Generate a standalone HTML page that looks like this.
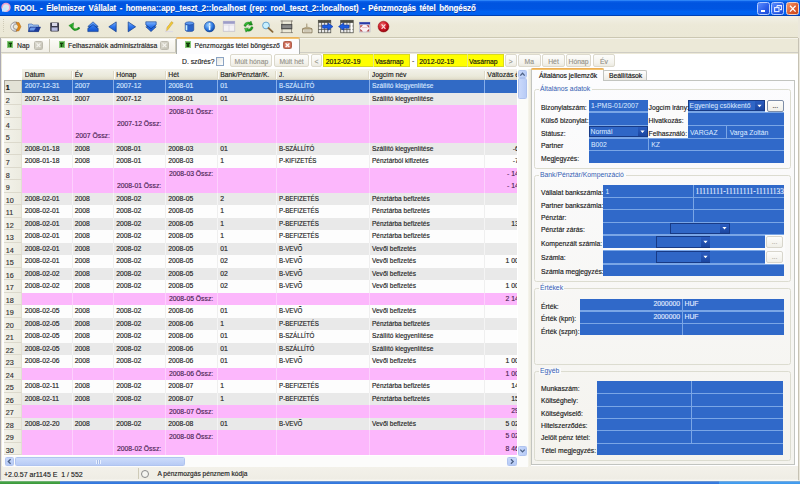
<!DOCTYPE html><html><head><meta charset="utf-8"><style>
*{box-sizing:border-box}
html,body{margin:0;padding:0}
body{width:800px;height:484px;overflow:hidden;position:relative;background:#ece9d8;font-family:"Liberation Sans",sans-serif;color:#000}
.a{position:absolute}
.t{position:absolute;white-space:nowrap;line-height:1;-webkit-text-stroke:0.15px currentColor}
.g{transform:scaleY(1.1);transform-origin:0 0}
</style></head><body>

<div class="a" style="left:0;top:0;width:800px;height:16px;background:linear-gradient(#3d95ff 0px,#0a5fe8 1.5px,#0054e0 3px,#0055e2 9px,#0062f2 11.5px,#0060ef 14.5px,#0041b5 15.5px,#0041b5 16px)"></div>
<svg class="a" style="left:0;top:0" width="14" height="16"><circle cx="6" cy="7.4" r="3.9" fill="#d8e8f0" stroke="#f0a0c8" stroke-width="1.6"/><rect x="2" y="7.6" width="4.6" height="4" fill="#c8e4ff"/></svg>
<div class="t" style="left:13.8px;top:3.6px;font-size:9px;word-spacing:1.5px;transform:scaleX(0.874);transform-origin:0 0;font-weight:bold;color:#fff;text-shadow:0.5px 0.5px 0 #0a3aa8">ROOL - Élelmiszer Vállalat - homena::app_teszt_2::localhost (rep: rool_teszt_2::localhost) - Pénzmozgás tétel böngésző</div>
<div class="a" style="left:757px;top:1.6px;width:13px;height:13px;border:0.9px solid #b4ccff;border-radius:2.5px;background:linear-gradient(135deg,#5c8eff,#2a5ce8 60%,#1c4cd8)"><div class="a" style="left:2.8px;top:7.6px;width:4.2px;height:1.6px;background:#fff"></div></div>
<div class="a" style="left:771px;top:1.6px;width:13px;height:13px;border:0.9px solid #b4ccff;border-radius:2.5px;background:linear-gradient(135deg,#5c8eff,#2a5ce8 60%,#1c4cd8)"><svg class="a" style="left:0;top:0" width="12" height="12"><path d="M5 2.6 H9.4 V6.6 H8 M5 2.6 V4.2" fill="none" stroke="#e8f0ff" stroke-width="1.1"/><rect x="2.6" y="4.6" width="4.4" height="4" fill="none" stroke="#e8f0ff" stroke-width="1.1"/></svg></div>
<div class="a" style="left:786px;top:1.6px;width:13px;height:13px;border:0.9px solid #f0d0c0;border-radius:2.5px;background:linear-gradient(135deg,#f29a70,#dc5a2c 60%,#c84a20)"><svg class="a" style="left:0;top:0" width="12" height="12"><path d="M3 2.8 L8.6 8.6 M8.6 2.8 L3 8.6" stroke="#fff" stroke-width="1.3"/></svg></div>
<div class="a" style="left:0;top:16px;width:800px;height:22px;background:linear-gradient(#f2f0e6,#ece9d8 40%,#ebe8d6)"></div>
<div class="a" style="left:0;top:37.2px;width:800px;height:1px;background:#cbc7b2"></div><div class="a" style="left:0;top:38.2px;width:800px;height:0.8px;background:#f5f3ea"></div>
<div class="a" style="left:2.5px;top:19px;width:1px;height:13px;background:repeating-linear-gradient(#cfcbb8 0 1px,transparent 1px 2px)"></div>
<svg class="a" style="left:0;top:16px" width="400" height="22" viewBox="0 16 400 22">
<defs>
<linearGradient id="gb" x1="0" y1="0" x2="0" y2="1"><stop offset="0" stop-color="#7fb4ff"/><stop offset="0.5" stop-color="#2a74ec"/><stop offset="1" stop-color="#1450c8"/></linearGradient>
<linearGradient id="gg" x1="0" y1="0" x2="1" y2="1"><stop offset="0" stop-color="#8ef07a"/><stop offset="0.5" stop-color="#22a822"/><stop offset="1" stop-color="#0c6c14"/></linearGradient>
<radialGradient id="gi" cx="0.4" cy="0.35" r="0.7"><stop offset="0" stop-color="#9ad0ff"/><stop offset="0.6" stop-color="#2c78e0"/><stop offset="1" stop-color="#10449c"/></radialGradient>
<radialGradient id="gr" cx="0.4" cy="0.35" r="0.7"><stop offset="0" stop-color="#f07070"/><stop offset="0.6" stop-color="#c81020"/><stop offset="1" stop-color="#8c0810"/></radialGradient>
</defs>
<!-- 1 gear/back -->
<path d="M16.5 22 A4.8 4.8 0 1 0 16.5 31.4 L16.5 29 A2.4 2.4 0 1 1 16.5 24.4 Z" fill="#c8c8cc" stroke="#7a7a80" stroke-width="0.6"/>
<path d="M14.6 23.4 A3.2 3.2 0 0 0 14.6 30 A3.5 3.5 0 0 1 14.6 23.4" fill="#fff"/>
<path d="M16.2 22.2 L19 22.6 L21 26.7 L19 30.8 L16.2 31.2 L18.2 26.7 Z" fill="#e08a1c" stroke="#9a5a10" stroke-width="0.4"/>
<!-- 2 folder -->
<path d="M28.5 24 L32 24 L33 25 L38.5 25 L38.5 31.5 L28.5 31.5 Z" fill="#9cc0f0" stroke="#3c64b0" stroke-width="0.6"/>
<path d="M30 27 L40.5 27 L38.5 31.6 L28.5 31.6 Z" fill="#1c3c9c" stroke="#0c2470" stroke-width="0.5"/>
<path d="M30.5 27.6 L36 27.6 L34 30.6 L29.4 30.6 Z" fill="#6c9ae8"/>
<!-- 3 floppy -->
<rect x="50.2" y="22.6" width="8.8" height="8.8" rx="0.8" fill="#3a3a4a"/>
<rect x="52" y="23" width="5.2" height="3" fill="#d8d8e8"/>
<rect x="51.6" y="27.4" width="6" height="3.4" fill="#b8bce0"/>
<!-- 4 green arrow -->
<path d="M68.8 25.6 L73.6 22.8 L73 29 Z" fill="#2cb42c" stroke="#0c6a12" stroke-width="0.4"/><path d="M71.6 26.6 C73 29.5 75.5 31 78.8 28.2" fill="none" stroke="#1a8a1e" stroke-width="2.3" stroke-linecap="round"/><path d="M72.2 26.4 C73.4 28.6 75.2 29.6 77.5 28.4" fill="none" stroke="#6cdc5c" stroke-width="0.8"/>
<!-- 5 double up -->
<path d="M93 21.8 L98.2 26.6 L96.2 26.6 L98.2 28.6 L98.2 31.6 L87.8 31.6 L87.8 28.6 L89.8 26.6 L87.8 26.6 Z" fill="url(#gb)" stroke="#0c3a8c" stroke-width="0.6"/>
<path d="M88.5 28.2 L93 24.6 L97.5 28.2" fill="none" stroke="#0c3a8c" stroke-width="0.7"/>
<!-- 6 left tri -->
<path d="M108.8 26.8 L116.2 21.9 L116.2 31.8 Z" fill="url(#gb)" stroke="#0c3a8c" stroke-width="0.7" stroke-linejoin="round"/>
<!-- 7 right tri -->
<path d="M135.6 26.8 L128.2 21.9 L128.2 31.8 Z" fill="url(#gb)" stroke="#0c3a8c" stroke-width="0.7" stroke-linejoin="round"/>
<!-- 8 double down -->
<path d="M151 31.6 L156.2 26.8 L154.2 26.8 L156.2 24.8 L156.2 21.8 L145.8 21.8 L145.8 24.8 L147.8 26.8 L145.8 26.8 Z" fill="url(#gb)" stroke="#0c3a8c" stroke-width="0.6"/>
<path d="M146.5 25.2 L151 28.8 L155.5 25.2" fill="none" stroke="#0c3a8c" stroke-width="0.7"/>
<!-- 9 pencil -->
<path d="M166 31.5 L166.5 28 L171.5 21.6 L173.2 22.8 L168.2 29.3 Z" fill="#f0c838" stroke="#b08a20" stroke-width="0.4"/>
<path d="M165 31.6 L173 31.6" stroke="#d8d4e8" stroke-width="0.8"/>
<path d="M166 26 L166 31 M166 26 L169 24" stroke="#e8e4f4" stroke-width="0.8"/>
<!-- 10 cylinder -->
<path d="M185.2 23.4 L185.2 30 A4.3 1.6 0 0 0 193.8 30 L193.8 23.4 Z" fill="#2a64c8" stroke="#143c8c" stroke-width="0.5"/>
<ellipse cx="189.5" cy="23.3" rx="4.3" ry="1.6" fill="#5c98f0" stroke="#143c8c" stroke-width="0.5"/>
<path d="M186.5 25.2 L186.5 30.3" stroke="#c8f0ff" stroke-width="1.6"/>
<!-- 11 info -->
<circle cx="209.5" cy="26.7" r="5.2" fill="url(#gi)" stroke="#0c3a8c" stroke-width="0.5"/>
<rect x="208.8" y="25.5" width="1.6" height="4.6" fill="#e8f6ff"/>
<circle cx="209.6" cy="23.9" r="0.9" fill="#e8f6ff"/>
<!-- 12 window -->
<rect x="223.2" y="21.2" width="11.6" height="10" fill="#f4f2f6" stroke="#b8b4c8" stroke-width="0.6"/>
<rect x="223.2" y="21.2" width="11.6" height="2.6" fill="#9c9cc8"/>
<path d="M224 25 L234 25 M229 25 L229 31" stroke="#c8c4d8" stroke-width="0.5"/>
<!-- 13 refresh -->
<path d="M244 26 C244 23 247 21.5 250 22.3 L251 21 L252.5 25 L248.5 25.2 L249.6 24.1 C247.8 23.7 246.2 24.6 246 26.4 Z" fill="url(#gg)" stroke="#0c6a12" stroke-width="0.4"/>
<path d="M253 27 C253 30 250 31.8 247 31 L246 32.2 L244.5 28.2 L248.5 28 L247.4 29.1 C249.2 29.5 250.8 28.6 251 26.8 Z" fill="url(#gg)" stroke="#0c6a12" stroke-width="0.4"/>
<!-- 14 magnifier -->
<circle cx="266" cy="25.5" r="3.4" fill="#c8f0ff" stroke="#5a9ac8" stroke-width="0.9"/>
<path d="M268.4 28 L272.6 31.8" stroke="#8a6a3c" stroke-width="1.8" stroke-linecap="round"/>
<!-- 15 film strip -->
<path d="M280.5 21 L293 21 M280.5 32.6 L293 32.6 M282 20.5 L282 33 M291.5 20.5 L291.5 33" stroke="#7a7468" stroke-width="0.7"/>
<rect x="281.5" y="24.2" width="10.5" height="4.8" fill="#585858" stroke="#3a3a3a" stroke-width="0.5"/>
<rect x="282.3" y="25.2" width="9" height="2.8" fill="#8a8a8a"/>
<!-- 16 tray -->
<path d="M302.6 28.8 L312 28.8 L312 32.8 L302.6 32.8 Z" fill="#ece6d4" stroke="#7c6e50" stroke-width="0.8"/>
<path d="M302.6 28.8 Q307.3 25.6 312 28.8 Z" fill="#c8b890" stroke="#8a7a58" stroke-width="0.5"/>
<path d="M306.8 23.6 L306.8 27.2" stroke="#9a8a68" stroke-width="0.9"/>
<path d="M304 31 L310.6 31" stroke="#9a9080" stroke-width="0.7"/>
<!-- 17 grid arrow right -->
<rect x="318.3" y="20.3" width="12.5" height="12.5" fill="#e8e8e8" stroke="#4a4a42" stroke-width="0.7"/>
<path d="M318.3 22.5 L330.8 22.5 M318.3 26 L330.8 26 M318.3 29.5 L330.8 29.5 M321.5 20.3 L321.5 32.8 M324.6 20.3 L324.6 32.8 M327.7 20.3 L327.7 32.8" stroke="#4a4a42" stroke-width="0.7"/>
<rect x="318.3" y="20.3" width="12.5" height="2.2" fill="#4a4a42"/>
<path d="M322.5 25 L328 25 L328 23 L333 26.6 L328 30.2 L328 28.2 L322.5 28.2 Z" fill="#1c5ce0" stroke="#0c2c98" stroke-width="0.5"/>
<!-- 18 grid arrow left -->
<rect x="340.7" y="20.3" width="12.5" height="12.5" fill="#e8e8e8" stroke="#4a4a42" stroke-width="0.7"/>
<path d="M340.7 22.5 L353.2 22.5 M340.7 26 L353.2 26 M340.7 29.5 L353.2 29.5 M343.8 20.3 L343.8 32.8 M346.9 20.3 L346.9 32.8 M350 20.3 L350 32.8" stroke="#4a4a42" stroke-width="0.7"/>
<rect x="340.7" y="20.3" width="12.5" height="2.2" fill="#4a4a42"/>
<rect x="350.6" y="23" width="1.8" height="9" fill="#fff"/>
<path d="M349 25 L343.5 25 L343.5 23 L338.5 26.6 L343.5 30.2 L343.5 28.2 L349 28.2 Z" fill="#1c5ce0" stroke="#0c2c98" stroke-width="0.5"/>
<!-- 19 red-white window -->
<rect x="359.4" y="22.2" width="10.6" height="9.8" fill="#fbf2f4" stroke="#9aa0c0" stroke-width="0.5"/>
<rect x="359.4" y="22.2" width="10.6" height="2.2" fill="#2a3aa8"/>
<path d="M360.2 25.2 L363 25.2 L360.2 28 Z M369.2 25.2 L366.4 25.2 L369.2 28 Z M360.2 31.4 L363 31.4 L360.2 28.8 Z M369.2 31.4 L366.4 31.4 L369.2 28.8 Z" fill="#b04848"/>
<path d="M362 27.6 L367.4 27.6" stroke="#e8b0b8" stroke-width="0.8"/>
<!-- 20 red X -->
<circle cx="383.5" cy="26.6" r="5.4" fill="url(#gr)" stroke="#8a0808" stroke-width="0.5"/>
<path d="M381.6 24.4 L385.4 28.8 M385.4 24.4 L381.6 28.8" stroke="#fbe0e0" stroke-width="1.1"/>
</svg>
<div class="a" style="left:0;top:39px;width:800px;height:13px;background:#ece9d8"></div>
<div class="a" style="left:0;top:51.8px;width:800px;height:1.2px;background:#cfcdc4"></div>
<div class="a" style="left:2px;top:39px;width:48px;height:13px;background:linear-gradient(#fbfaf6,#f1efe6);border-top:0.8px solid #fff"></div>
<div class="a" style="left:49px;top:39px;width:1.2px;height:13px;background:#c9c6b5"></div>
<div class="a" style="left:7.3px;top:41.2px;width:6px;height:7px;background:#3e9434;border:0.8px solid #86c878"></div>
<div class="a" style="left:8.6px;top:42.7px;width:3.4px;height:1.3px;background:#143c0c"></div>
<div class="a" style="left:9.6px;top:43.7px;width:1.4px;height:3.5px;background:#143c0c"></div>
<div class="t" style="left:17px;top:43.3px;font-size:6.8px;color:#222">Nap</div>
<div class="a" style="left:34px;top:41.2px;width:9px;height:8.5px;border-radius:1.5px;background:linear-gradient(135deg,#dcdad0,#c4c1b4);border:0.5px solid #bdbaae"></div>
<svg class="a" style="left:34px;top:41.2px" width="9" height="8.5"><path d="M2.6 2.4 L6.4 6.1 M6.4 2.4 L2.6 6.1" stroke="#f4f3ee" stroke-width="1.2"/></svg>
<div class="a" style="left:50px;top:39px;width:126px;height:13px;background:linear-gradient(#fbfaf6,#f1efe6);border-top:0.8px solid #fff"></div>
<div class="a" style="left:175px;top:39px;width:1.2px;height:13px;background:#c9c6b5"></div>
<div class="a" style="left:58.5px;top:41.2px;width:6px;height:7px;background:#3e9434;border:0.8px solid #86c878"></div>
<div class="a" style="left:59.8px;top:42.7px;width:3.4px;height:1.3px;background:#143c0c"></div>
<div class="a" style="left:60.8px;top:43.7px;width:1.4px;height:3.5px;background:#143c0c"></div>
<div class="t" style="left:68px;top:43.3px;font-size:6.8px;color:#222">Felhasználók adminisztrálása</div>
<div class="a" style="left:160px;top:41.2px;width:9px;height:8.5px;border-radius:1.5px;background:linear-gradient(135deg,#dcdad0,#c4c1b4);border:0.5px solid #bdbaae"></div>
<svg class="a" style="left:160px;top:41.2px" width="9" height="8.5"><path d="M2.6 2.4 L6.4 6.1 M6.4 2.4 L2.6 6.1" stroke="#f4f3ee" stroke-width="1.2"/></svg>
<div class="a" style="left:176.3px;top:37.5px;width:124.0px;height:16px;background:#fcfcfe;border:1px solid #a8aca8;border-bottom:none;border-radius:2px 2px 0 0"></div>
<div class="a" style="left:176.3px;top:37.4px;width:124.0px;height:2px;background:linear-gradient(#e6a850,#f6d080);border-radius:2px 2px 0 0"></div>
<div class="a" style="left:185px;top:41px;width:6px;height:7px;background:#3e9434;border:0.8px solid #86c878"></div>
<div class="a" style="left:186.3px;top:42.5px;width:3.4px;height:1.3px;background:#143c0c"></div>
<div class="a" style="left:187.3px;top:43.5px;width:1.4px;height:3.5px;background:#143c0c"></div>
<div class="t" style="left:194.5px;top:43.3px;font-size:6.8px;color:#222">Pénzmozgás tétel böngésző</div>
<div class="a" style="left:283.2px;top:40.7px;width:9px;height:8.5px;border-radius:1.5px;background:radial-gradient(circle at 50% 50%,#f0b8a8,#cc6a58 70%,#b85a48);border:0.5px solid #b0604c"></div>
<svg class="a" style="left:283.2px;top:40.7px" width="9" height="8.5"><path d="M2.6 2.4 L6.4 6.1 M6.4 2.4 L2.6 6.1" stroke="#fff" stroke-width="1.3"/></svg>
<div class="a" style="left:1.5px;top:53.5px;width:796px;height:413px;background:#fff"></div>
<div class="a" style="left:0;top:38px;width:1.2px;height:442px;background:#acaab4"></div>
<div class="a" style="left:797.6px;top:16px;width:2.4px;height:464px;background:#ebe8dc"></div><div class="a" style="left:797.6px;top:38px;width:1px;height:442px;background:#c6c2b4"></div>
<div class="a" style="left:1.5px;top:466px;width:796px;height:14.5px;background:linear-gradient(#f3f1ea,#efede5 85%,#fafaf6)"></div>
<div class="a" style="left:0;top:480.5px;width:800px;height:3.5px;background:linear-gradient(#8aa4c8,#3a7ee0 40%,#2f74dc)"></div>
<div class="a" style="left:719px;top:480.5px;width:81px;height:3.5px;background:linear-gradient(#90b0d0,#48a0f0 40%,#3c98ec)"></div>
<div class="a" style="left:0;top:480.5px;width:59.5px;height:3.5px;background:linear-gradient(#8ab890,#46a646 40%,#3a963a)"></div>
<div class="a" style="left:22px;top:69.0px;width:495px;height:11.25px;background:linear-gradient(#f3f2ea,#ebeadb 70%,#e2dfcc);border-bottom:1px solid #d6d2c2"></div>
<div class="a" style="left:71px;top:70.5px;width:1px;height:8.25px;background:#dedac8"></div><div class="a" style="left:72px;top:70.5px;width:1px;height:8.25px;background:#fcfcf8"></div>
<div class="t" style="left:24.75px;top:69.2px;padding-top:3px;font-size:6.8px;color:#1a1a1a;width:47px;overflow:hidden">Dátum</div>
<div class="a" style="left:112.5px;top:70.5px;width:1px;height:8.25px;background:#dedac8"></div><div class="a" style="left:113.5px;top:70.5px;width:1px;height:8.25px;background:#fcfcf8"></div>
<div class="t" style="left:74.75px;top:69.2px;padding-top:3px;font-size:6.8px;color:#1a1a1a;width:38.5px;overflow:hidden">Év</div>
<div class="a" style="left:164.5px;top:70.5px;width:1px;height:8.25px;background:#dedac8"></div><div class="a" style="left:165.5px;top:70.5px;width:1px;height:8.25px;background:#fcfcf8"></div>
<div class="t" style="left:116.25px;top:69.2px;padding-top:3px;font-size:6.8px;color:#1a1a1a;width:49.0px;overflow:hidden">Hónap</div>
<div class="a" style="left:216.5px;top:70.5px;width:1px;height:8.25px;background:#dedac8"></div><div class="a" style="left:217.5px;top:70.5px;width:1px;height:8.25px;background:#fcfcf8"></div>
<div class="t" style="left:168.25px;top:69.2px;padding-top:3px;font-size:6.8px;color:#1a1a1a;width:49.0px;overflow:hidden">Hét</div>
<div class="a" style="left:275px;top:70.5px;width:1px;height:8.25px;background:#dedac8"></div><div class="a" style="left:276px;top:70.5px;width:1px;height:8.25px;background:#fcfcf8"></div>
<div class="t" style="left:220.25px;top:69.2px;padding-top:3px;font-size:6.8px;color:#1a1a1a;width:55.5px;overflow:hidden">Bank/Pénztár/K.</div>
<div class="a" style="left:368px;top:70.5px;width:1px;height:8.25px;background:#dedac8"></div><div class="a" style="left:369px;top:70.5px;width:1px;height:8.25px;background:#fcfcf8"></div>
<div class="t" style="left:278.75px;top:69.2px;padding-top:3px;font-size:6.8px;color:#1a1a1a;width:90px;overflow:hidden">J.</div>
<div class="a" style="left:483.5px;top:70.5px;width:1px;height:8.25px;background:#dedac8"></div><div class="a" style="left:484.5px;top:70.5px;width:1px;height:8.25px;background:#fcfcf8"></div>
<div class="t" style="left:371.75px;top:69.2px;padding-top:3px;font-size:6.8px;color:#1a1a1a;width:112.5px;overflow:hidden">Jogcím név</div>
<div class="a" style="left:516px;top:70.5px;width:1px;height:8.25px;background:#dedac8"></div><div class="a" style="left:517px;top:70.5px;width:1px;height:8.25px;background:#fcfcf8"></div>
<div class="t" style="left:487.25px;top:69.2px;padding-top:3px;font-size:6.8px;color:#1a1a1a;width:29.5px;overflow:hidden">Változás é</div>
<div class="a" style="left:3.5px;top:80.25px;width:18.5px;height:12.5px;background:#e3e2d6;border:1px solid #a8a59a;border-right-color:#c8c5b8"></div>
<div class="t" style="left:5.8px;top:84.15px;font-size:7.2px;color:#101010;font-weight:bold">1</div>
<div class="a" style="left:22px;top:80.25px;width:495px;height:12.5px;background:#316ac5"></div>
<div class="a" style="left:71.5px;top:80.25px;width:1px;height:12.5px;background:#86aeea"></div>
<div class="a" style="left:113.0px;top:80.25px;width:1px;height:12.5px;background:#86aeea"></div>
<div class="a" style="left:165.0px;top:80.25px;width:1px;height:12.5px;background:#86aeea"></div>
<div class="a" style="left:217.0px;top:80.25px;width:1px;height:12.5px;background:#86aeea"></div>
<div class="a" style="left:275.5px;top:80.25px;width:1px;height:12.5px;background:#86aeea"></div>
<div class="a" style="left:368.5px;top:80.25px;width:1px;height:12.5px;background:#86aeea"></div>
<div class="a" style="left:484.0px;top:80.25px;width:1px;height:12.5px;background:#86aeea"></div>
<div class="t g" style="left:24.75px;top:82.05px;font-size:6.8px;color:#d4e4ff;">2007-12-31</div>
<div class="t g" style="left:74.75px;top:82.05px;font-size:6.8px;color:#d4e4ff;">2007</div>
<div class="t g" style="left:116.25px;top:82.05px;font-size:6.8px;color:#d4e4ff;">2007-12</div>
<div class="t g" style="left:168.25px;top:82.05px;font-size:6.8px;color:#d4e4ff;">2008-01</div>
<div class="t g" style="left:220.25px;top:82.05px;font-size:6.8px;color:#d4e4ff;">01</div>
<div class="t g" style="left:278.75px;top:82.05px;font-size:6.8px;color:#d4e4ff;transform:scale(0.91,1.1)">B-SZÁLLÍTÓ</div>
<div class="t g" style="left:371.75px;top:82.05px;font-size:6.8px;color:#d4e4ff;transform:scale(0.96,1.1)">Szállító kiegyenlítése</div>
<div class="a" style="left:3.5px;top:92.75px;width:18.5px;height:12.5px;background:linear-gradient(90deg,#f3f2ea,#ecebe0);border-bottom:1px solid #dcd9cc;border-right:1px solid #e2dfd2"></div>
<div class="t" style="left:5.8px;top:96.65px;font-size:7.2px;color:#303030;">2</div>
<div class="a" style="left:22px;top:92.75px;width:495px;height:12.5px;background:#e9e9e9"></div>
<div class="a" style="left:71.5px;top:92.75px;width:1px;height:12.5px;background:#f4f4f4"></div>
<div class="a" style="left:113.0px;top:92.75px;width:1px;height:12.5px;background:#f4f4f4"></div>
<div class="a" style="left:165.0px;top:92.75px;width:1px;height:12.5px;background:#f4f4f4"></div>
<div class="a" style="left:217.0px;top:92.75px;width:1px;height:12.5px;background:#f4f4f4"></div>
<div class="a" style="left:275.5px;top:92.75px;width:1px;height:12.5px;background:#f4f4f4"></div>
<div class="a" style="left:368.5px;top:92.75px;width:1px;height:12.5px;background:#f4f4f4"></div>
<div class="a" style="left:484.0px;top:92.75px;width:1px;height:12.5px;background:#f4f4f4"></div>
<div class="t g" style="left:24.75px;top:94.55px;font-size:6.8px;color:#1e1e1e;">2007-12-31</div>
<div class="t g" style="left:74.75px;top:94.55px;font-size:6.8px;color:#1e1e1e;">2007</div>
<div class="t g" style="left:116.25px;top:94.55px;font-size:6.8px;color:#1e1e1e;">2007-12</div>
<div class="t g" style="left:168.25px;top:94.55px;font-size:6.8px;color:#1e1e1e;">2008-01</div>
<div class="t g" style="left:220.25px;top:94.55px;font-size:6.8px;color:#1e1e1e;">01</div>
<div class="t g" style="left:278.75px;top:94.55px;font-size:6.8px;color:#1e1e1e;transform:scale(0.91,1.1)">B-SZÁLLÍTÓ</div>
<div class="t g" style="left:371.75px;top:94.55px;font-size:6.8px;color:#1e1e1e;transform:scale(0.96,1.1)">Szállító kiegyenlítése</div>
<div class="a" style="left:3.5px;top:105.25px;width:18.5px;height:12.5px;background:linear-gradient(90deg,#f3f2ea,#ecebe0);border-bottom:1px solid #dcd9cc;border-right:1px solid #e2dfd2"></div>
<div class="t" style="left:5.8px;top:109.15px;font-size:7.2px;color:#303030;">3</div>
<div class="a" style="left:22px;top:105.25px;width:495px;height:12.5px;background:#fcb7fc"></div>
<div class="a" style="left:71.5px;top:105.25px;width:1px;height:12.5px;background:#fdd0fd"></div>
<div class="a" style="left:113.0px;top:105.25px;width:1px;height:12.5px;background:#fdd0fd"></div>
<div class="a" style="left:165.0px;top:105.25px;width:1px;height:12.5px;background:#fdd0fd"></div>
<div class="a" style="left:217.0px;top:105.25px;width:1px;height:12.5px;background:#fdd0fd"></div>
<div class="a" style="left:275.5px;top:105.25px;width:1px;height:12.5px;background:#fdd0fd"></div>
<div class="a" style="left:368.5px;top:105.25px;width:1px;height:12.5px;background:#fdd0fd"></div>
<div class="a" style="left:484.0px;top:105.25px;width:1px;height:12.5px;background:#fdd0fd"></div>
<div class="t g" style="left:169.0px;top:107.64999999999999px;font-size:6.8px;color:#4a1f52">2008-01 Össz:</div>
<div class="a" style="left:3.5px;top:117.75px;width:18.5px;height:12.5px;background:linear-gradient(90deg,#f3f2ea,#ecebe0);border-bottom:1px solid #dcd9cc;border-right:1px solid #e2dfd2"></div>
<div class="t" style="left:5.8px;top:121.65px;font-size:7.2px;color:#303030;">4</div>
<div class="a" style="left:22px;top:117.75px;width:495px;height:12.5px;background:#fcb7fc"></div>
<div class="a" style="left:71.5px;top:117.75px;width:1px;height:12.5px;background:#fdd0fd"></div>
<div class="a" style="left:113.0px;top:117.75px;width:1px;height:12.5px;background:#fdd0fd"></div>
<div class="a" style="left:165.0px;top:117.75px;width:1px;height:12.5px;background:#fdd0fd"></div>
<div class="a" style="left:217.0px;top:117.75px;width:1px;height:12.5px;background:#fdd0fd"></div>
<div class="a" style="left:275.5px;top:117.75px;width:1px;height:12.5px;background:#fdd0fd"></div>
<div class="a" style="left:368.5px;top:117.75px;width:1px;height:12.5px;background:#fdd0fd"></div>
<div class="a" style="left:484.0px;top:117.75px;width:1px;height:12.5px;background:#fdd0fd"></div>
<div class="t g" style="left:117.0px;top:119.95px;font-size:6.8px;color:#4a1f52">2007-12 Össz:</div>
<div class="a" style="left:3.5px;top:130.25px;width:18.5px;height:12.5px;background:linear-gradient(90deg,#f3f2ea,#ecebe0);border-bottom:1px solid #dcd9cc;border-right:1px solid #e2dfd2"></div>
<div class="t" style="left:5.8px;top:134.15px;font-size:7.2px;color:#303030;">5</div>
<div class="a" style="left:22px;top:130.25px;width:495px;height:12.5px;background:#fcb7fc"></div>
<div class="a" style="left:71.5px;top:130.25px;width:1px;height:12.5px;background:#fdd0fd"></div>
<div class="a" style="left:113.0px;top:130.25px;width:1px;height:12.5px;background:#fdd0fd"></div>
<div class="a" style="left:165.0px;top:130.25px;width:1px;height:12.5px;background:#fdd0fd"></div>
<div class="a" style="left:217.0px;top:130.25px;width:1px;height:12.5px;background:#fdd0fd"></div>
<div class="a" style="left:275.5px;top:130.25px;width:1px;height:12.5px;background:#fdd0fd"></div>
<div class="a" style="left:368.5px;top:130.25px;width:1px;height:12.5px;background:#fdd0fd"></div>
<div class="a" style="left:484.0px;top:130.25px;width:1px;height:12.5px;background:#fdd0fd"></div>
<div class="t g" style="left:75.5px;top:131.75px;font-size:6.8px;color:#4a1f52">2007 Össz:</div>
<div class="a" style="left:3.5px;top:142.75px;width:18.5px;height:12.5px;background:linear-gradient(90deg,#f3f2ea,#ecebe0);border-bottom:1px solid #dcd9cc;border-right:1px solid #e2dfd2"></div>
<div class="t" style="left:5.8px;top:146.65px;font-size:7.2px;color:#303030;">6</div>
<div class="a" style="left:22px;top:142.75px;width:495px;height:12.5px;background:#e9e9e9"></div>
<div class="a" style="left:71.5px;top:142.75px;width:1px;height:12.5px;background:#f4f4f4"></div>
<div class="a" style="left:113.0px;top:142.75px;width:1px;height:12.5px;background:#f4f4f4"></div>
<div class="a" style="left:165.0px;top:142.75px;width:1px;height:12.5px;background:#f4f4f4"></div>
<div class="a" style="left:217.0px;top:142.75px;width:1px;height:12.5px;background:#f4f4f4"></div>
<div class="a" style="left:275.5px;top:142.75px;width:1px;height:12.5px;background:#f4f4f4"></div>
<div class="a" style="left:368.5px;top:142.75px;width:1px;height:12.5px;background:#f4f4f4"></div>
<div class="a" style="left:484.0px;top:142.75px;width:1px;height:12.5px;background:#f4f4f4"></div>
<div class="t g" style="left:24.75px;top:144.55px;font-size:6.8px;color:#1e1e1e;">2008-01-18</div>
<div class="t g" style="left:74.75px;top:144.55px;font-size:6.8px;color:#1e1e1e;">2008</div>
<div class="t g" style="left:116.25px;top:144.55px;font-size:6.8px;color:#1e1e1e;">2008-01</div>
<div class="t g" style="left:168.25px;top:144.55px;font-size:6.8px;color:#1e1e1e;">2008-03</div>
<div class="t g" style="left:220.25px;top:144.55px;font-size:6.8px;color:#1e1e1e;">01</div>
<div class="t g" style="left:278.75px;top:144.55px;font-size:6.8px;color:#1e1e1e;transform:scale(0.91,1.1)">B-SZÁLLÍTÓ</div>
<div class="t g" style="left:371.75px;top:144.55px;font-size:6.8px;color:#1e1e1e;transform:scale(0.96,1.1)">Szállító kiegyenlítése</div>
<div class="a" style="left:484.5px;top:144.95px;width:32.5px;height:9px;overflow:hidden"><div class="t" style="right:-5.5px;top:1px;font-size:6.8px;color:#1e1e1e">-60</div></div>
<div class="a" style="left:3.5px;top:155.25px;width:18.5px;height:12.5px;background:linear-gradient(90deg,#f3f2ea,#ecebe0);border-bottom:1px solid #dcd9cc;border-right:1px solid #e2dfd2"></div>
<div class="t" style="left:5.8px;top:159.15px;font-size:7.2px;color:#303030;">7</div>
<div class="a" style="left:22px;top:155.25px;width:495px;height:12.5px;background:#fdfdfd"></div>
<div class="a" style="left:71.5px;top:155.25px;width:1px;height:12.5px;background:#efefef"></div>
<div class="a" style="left:113.0px;top:155.25px;width:1px;height:12.5px;background:#efefef"></div>
<div class="a" style="left:165.0px;top:155.25px;width:1px;height:12.5px;background:#efefef"></div>
<div class="a" style="left:217.0px;top:155.25px;width:1px;height:12.5px;background:#efefef"></div>
<div class="a" style="left:275.5px;top:155.25px;width:1px;height:12.5px;background:#efefef"></div>
<div class="a" style="left:368.5px;top:155.25px;width:1px;height:12.5px;background:#efefef"></div>
<div class="a" style="left:484.0px;top:155.25px;width:1px;height:12.5px;background:#efefef"></div>
<div class="t g" style="left:24.75px;top:157.05px;font-size:6.8px;color:#1e1e1e;">2008-01-18</div>
<div class="t g" style="left:74.75px;top:157.05px;font-size:6.8px;color:#1e1e1e;">2008</div>
<div class="t g" style="left:116.25px;top:157.05px;font-size:6.8px;color:#1e1e1e;">2008-01</div>
<div class="t g" style="left:168.25px;top:157.05px;font-size:6.8px;color:#1e1e1e;">2008-03</div>
<div class="t g" style="left:220.25px;top:157.05px;font-size:6.8px;color:#1e1e1e;">1</div>
<div class="t g" style="left:278.75px;top:157.05px;font-size:6.8px;color:#1e1e1e;transform:scale(0.91,1.1)">P-KIFIZETÉS</div>
<div class="t g" style="left:371.75px;top:157.05px;font-size:6.8px;color:#1e1e1e;transform:scale(0.96,1.1)">Pénztárból kifizetés</div>
<div class="a" style="left:484.5px;top:157.45px;width:32.5px;height:9px;overflow:hidden"><div class="t" style="right:-5.5px;top:1px;font-size:6.8px;color:#1e1e1e">-70</div></div>
<div class="a" style="left:3.5px;top:167.75px;width:18.5px;height:12.5px;background:linear-gradient(90deg,#f3f2ea,#ecebe0);border-bottom:1px solid #dcd9cc;border-right:1px solid #e2dfd2"></div>
<div class="t" style="left:5.8px;top:171.65px;font-size:7.2px;color:#303030;">8</div>
<div class="a" style="left:22px;top:167.75px;width:495px;height:12.5px;background:#fcb7fc"></div>
<div class="a" style="left:71.5px;top:167.75px;width:1px;height:12.5px;background:#fdd0fd"></div>
<div class="a" style="left:113.0px;top:167.75px;width:1px;height:12.5px;background:#fdd0fd"></div>
<div class="a" style="left:165.0px;top:167.75px;width:1px;height:12.5px;background:#fdd0fd"></div>
<div class="a" style="left:217.0px;top:167.75px;width:1px;height:12.5px;background:#fdd0fd"></div>
<div class="a" style="left:275.5px;top:167.75px;width:1px;height:12.5px;background:#fdd0fd"></div>
<div class="a" style="left:368.5px;top:167.75px;width:1px;height:12.5px;background:#fdd0fd"></div>
<div class="a" style="left:484.0px;top:167.75px;width:1px;height:12.5px;background:#fdd0fd"></div>
<div class="t g" style="left:169.0px;top:170.15px;font-size:6.8px;color:#4a1f52">2008-03 Össz:</div>
<div class="a" style="left:484.5px;top:169.95px;width:32.5px;height:9px;overflow:hidden"><div class="t" style="right:-5.5px;top:1px;font-size:6.8px;color:#4a1f52">- 140</div></div>
<div class="a" style="left:3.5px;top:180.25px;width:18.5px;height:12.5px;background:linear-gradient(90deg,#f3f2ea,#ecebe0);border-bottom:1px solid #dcd9cc;border-right:1px solid #e2dfd2"></div>
<div class="t" style="left:5.8px;top:184.15px;font-size:7.2px;color:#303030;">9</div>
<div class="a" style="left:22px;top:180.25px;width:495px;height:12.5px;background:#fcb7fc"></div>
<div class="a" style="left:71.5px;top:180.25px;width:1px;height:12.5px;background:#fdd0fd"></div>
<div class="a" style="left:113.0px;top:180.25px;width:1px;height:12.5px;background:#fdd0fd"></div>
<div class="a" style="left:165.0px;top:180.25px;width:1px;height:12.5px;background:#fdd0fd"></div>
<div class="a" style="left:217.0px;top:180.25px;width:1px;height:12.5px;background:#fdd0fd"></div>
<div class="a" style="left:275.5px;top:180.25px;width:1px;height:12.5px;background:#fdd0fd"></div>
<div class="a" style="left:368.5px;top:180.25px;width:1px;height:12.5px;background:#fdd0fd"></div>
<div class="a" style="left:484.0px;top:180.25px;width:1px;height:12.5px;background:#fdd0fd"></div>
<div class="t g" style="left:117.0px;top:182.45000000000002px;font-size:6.8px;color:#4a1f52">2008-01 Össz:</div>
<div class="a" style="left:484.5px;top:182.45px;width:32.5px;height:9px;overflow:hidden"><div class="t" style="right:-5.5px;top:1px;font-size:6.8px;color:#4a1f52">- 140</div></div>
<div class="a" style="left:3.5px;top:192.75px;width:18.5px;height:12.5px;background:linear-gradient(90deg,#f3f2ea,#ecebe0);border-bottom:1px solid #dcd9cc;border-right:1px solid #e2dfd2"></div>
<div class="t" style="left:5.8px;top:196.65px;font-size:7.2px;color:#303030;">10</div>
<div class="a" style="left:22px;top:192.75px;width:495px;height:12.5px;background:#e9e9e9"></div>
<div class="a" style="left:71.5px;top:192.75px;width:1px;height:12.5px;background:#f4f4f4"></div>
<div class="a" style="left:113.0px;top:192.75px;width:1px;height:12.5px;background:#f4f4f4"></div>
<div class="a" style="left:165.0px;top:192.75px;width:1px;height:12.5px;background:#f4f4f4"></div>
<div class="a" style="left:217.0px;top:192.75px;width:1px;height:12.5px;background:#f4f4f4"></div>
<div class="a" style="left:275.5px;top:192.75px;width:1px;height:12.5px;background:#f4f4f4"></div>
<div class="a" style="left:368.5px;top:192.75px;width:1px;height:12.5px;background:#f4f4f4"></div>
<div class="a" style="left:484.0px;top:192.75px;width:1px;height:12.5px;background:#f4f4f4"></div>
<div class="t g" style="left:24.75px;top:194.55px;font-size:6.8px;color:#1e1e1e;">2008-02-01</div>
<div class="t g" style="left:74.75px;top:194.55px;font-size:6.8px;color:#1e1e1e;">2008</div>
<div class="t g" style="left:116.25px;top:194.55px;font-size:6.8px;color:#1e1e1e;">2008-02</div>
<div class="t g" style="left:168.25px;top:194.55px;font-size:6.8px;color:#1e1e1e;">2008-05</div>
<div class="t g" style="left:220.25px;top:194.55px;font-size:6.8px;color:#1e1e1e;">2</div>
<div class="t g" style="left:278.75px;top:194.55px;font-size:6.8px;color:#1e1e1e;transform:scale(0.91,1.1)">P-BEFIZETÉS</div>
<div class="t g" style="left:371.75px;top:194.55px;font-size:6.8px;color:#1e1e1e;transform:scale(0.96,1.1)">Pénztárba befizetés</div>
<div class="a" style="left:3.5px;top:205.25px;width:18.5px;height:12.5px;background:linear-gradient(90deg,#f3f2ea,#ecebe0);border-bottom:1px solid #dcd9cc;border-right:1px solid #e2dfd2"></div>
<div class="t" style="left:5.8px;top:209.15px;font-size:7.2px;color:#303030;">11</div>
<div class="a" style="left:22px;top:205.25px;width:495px;height:12.5px;background:#fdfdfd"></div>
<div class="a" style="left:71.5px;top:205.25px;width:1px;height:12.5px;background:#efefef"></div>
<div class="a" style="left:113.0px;top:205.25px;width:1px;height:12.5px;background:#efefef"></div>
<div class="a" style="left:165.0px;top:205.25px;width:1px;height:12.5px;background:#efefef"></div>
<div class="a" style="left:217.0px;top:205.25px;width:1px;height:12.5px;background:#efefef"></div>
<div class="a" style="left:275.5px;top:205.25px;width:1px;height:12.5px;background:#efefef"></div>
<div class="a" style="left:368.5px;top:205.25px;width:1px;height:12.5px;background:#efefef"></div>
<div class="a" style="left:484.0px;top:205.25px;width:1px;height:12.5px;background:#efefef"></div>
<div class="t g" style="left:24.75px;top:207.05px;font-size:6.8px;color:#1e1e1e;">2008-02-01</div>
<div class="t g" style="left:74.75px;top:207.05px;font-size:6.8px;color:#1e1e1e;">2008</div>
<div class="t g" style="left:116.25px;top:207.05px;font-size:6.8px;color:#1e1e1e;">2008-02</div>
<div class="t g" style="left:168.25px;top:207.05px;font-size:6.8px;color:#1e1e1e;">2008-05</div>
<div class="t g" style="left:220.25px;top:207.05px;font-size:6.8px;color:#1e1e1e;">1</div>
<div class="t g" style="left:278.75px;top:207.05px;font-size:6.8px;color:#1e1e1e;transform:scale(0.91,1.1)">P-BEFIZETÉS</div>
<div class="t g" style="left:371.75px;top:207.05px;font-size:6.8px;color:#1e1e1e;transform:scale(0.96,1.1)">Pénztárba befizetés</div>
<div class="a" style="left:3.5px;top:217.75px;width:18.5px;height:12.5px;background:linear-gradient(90deg,#f3f2ea,#ecebe0);border-bottom:1px solid #dcd9cc;border-right:1px solid #e2dfd2"></div>
<div class="t" style="left:5.8px;top:221.65px;font-size:7.2px;color:#303030;">12</div>
<div class="a" style="left:22px;top:217.75px;width:495px;height:12.5px;background:#e9e9e9"></div>
<div class="a" style="left:71.5px;top:217.75px;width:1px;height:12.5px;background:#f4f4f4"></div>
<div class="a" style="left:113.0px;top:217.75px;width:1px;height:12.5px;background:#f4f4f4"></div>
<div class="a" style="left:165.0px;top:217.75px;width:1px;height:12.5px;background:#f4f4f4"></div>
<div class="a" style="left:217.0px;top:217.75px;width:1px;height:12.5px;background:#f4f4f4"></div>
<div class="a" style="left:275.5px;top:217.75px;width:1px;height:12.5px;background:#f4f4f4"></div>
<div class="a" style="left:368.5px;top:217.75px;width:1px;height:12.5px;background:#f4f4f4"></div>
<div class="a" style="left:484.0px;top:217.75px;width:1px;height:12.5px;background:#f4f4f4"></div>
<div class="t g" style="left:24.75px;top:219.55px;font-size:6.8px;color:#1e1e1e;">2008-02-01</div>
<div class="t g" style="left:74.75px;top:219.55px;font-size:6.8px;color:#1e1e1e;">2008</div>
<div class="t g" style="left:116.25px;top:219.55px;font-size:6.8px;color:#1e1e1e;">2008-02</div>
<div class="t g" style="left:168.25px;top:219.55px;font-size:6.8px;color:#1e1e1e;">2008-05</div>
<div class="t g" style="left:220.25px;top:219.55px;font-size:6.8px;color:#1e1e1e;">1</div>
<div class="t g" style="left:278.75px;top:219.55px;font-size:6.8px;color:#1e1e1e;transform:scale(0.91,1.1)">P-BEFIZETÉS</div>
<div class="t g" style="left:371.75px;top:219.55px;font-size:6.8px;color:#1e1e1e;transform:scale(0.96,1.1)">Pénztárba befizetés</div>
<div class="a" style="left:484.5px;top:219.95px;width:32.5px;height:9px;overflow:hidden"><div class="t" style="right:-5.5px;top:1px;font-size:6.8px;color:#1e1e1e">130</div></div>
<div class="a" style="left:3.5px;top:230.25px;width:18.5px;height:12.5px;background:linear-gradient(90deg,#f3f2ea,#ecebe0);border-bottom:1px solid #dcd9cc;border-right:1px solid #e2dfd2"></div>
<div class="t" style="left:5.8px;top:234.15px;font-size:7.2px;color:#303030;">13</div>
<div class="a" style="left:22px;top:230.25px;width:495px;height:12.5px;background:#fdfdfd"></div>
<div class="a" style="left:71.5px;top:230.25px;width:1px;height:12.5px;background:#efefef"></div>
<div class="a" style="left:113.0px;top:230.25px;width:1px;height:12.5px;background:#efefef"></div>
<div class="a" style="left:165.0px;top:230.25px;width:1px;height:12.5px;background:#efefef"></div>
<div class="a" style="left:217.0px;top:230.25px;width:1px;height:12.5px;background:#efefef"></div>
<div class="a" style="left:275.5px;top:230.25px;width:1px;height:12.5px;background:#efefef"></div>
<div class="a" style="left:368.5px;top:230.25px;width:1px;height:12.5px;background:#efefef"></div>
<div class="a" style="left:484.0px;top:230.25px;width:1px;height:12.5px;background:#efefef"></div>
<div class="t g" style="left:24.75px;top:232.05px;font-size:6.8px;color:#1e1e1e;">2008-02-01</div>
<div class="t g" style="left:74.75px;top:232.05px;font-size:6.8px;color:#1e1e1e;">2008</div>
<div class="t g" style="left:116.25px;top:232.05px;font-size:6.8px;color:#1e1e1e;">2008-02</div>
<div class="t g" style="left:168.25px;top:232.05px;font-size:6.8px;color:#1e1e1e;">2008-05</div>
<div class="t g" style="left:220.25px;top:232.05px;font-size:6.8px;color:#1e1e1e;">1</div>
<div class="t g" style="left:278.75px;top:232.05px;font-size:6.8px;color:#1e1e1e;transform:scale(0.91,1.1)">P-BEFIZETÉS</div>
<div class="t g" style="left:371.75px;top:232.05px;font-size:6.8px;color:#1e1e1e;transform:scale(0.96,1.1)">Pénztárba befizetés</div>
<div class="a" style="left:3.5px;top:242.75px;width:18.5px;height:12.5px;background:linear-gradient(90deg,#f3f2ea,#ecebe0);border-bottom:1px solid #dcd9cc;border-right:1px solid #e2dfd2"></div>
<div class="t" style="left:5.8px;top:246.65px;font-size:7.2px;color:#303030;">14</div>
<div class="a" style="left:22px;top:242.75px;width:495px;height:12.5px;background:#e9e9e9"></div>
<div class="a" style="left:71.5px;top:242.75px;width:1px;height:12.5px;background:#f4f4f4"></div>
<div class="a" style="left:113.0px;top:242.75px;width:1px;height:12.5px;background:#f4f4f4"></div>
<div class="a" style="left:165.0px;top:242.75px;width:1px;height:12.5px;background:#f4f4f4"></div>
<div class="a" style="left:217.0px;top:242.75px;width:1px;height:12.5px;background:#f4f4f4"></div>
<div class="a" style="left:275.5px;top:242.75px;width:1px;height:12.5px;background:#f4f4f4"></div>
<div class="a" style="left:368.5px;top:242.75px;width:1px;height:12.5px;background:#f4f4f4"></div>
<div class="a" style="left:484.0px;top:242.75px;width:1px;height:12.5px;background:#f4f4f4"></div>
<div class="t g" style="left:24.75px;top:244.55px;font-size:6.8px;color:#1e1e1e;">2008-02-01</div>
<div class="t g" style="left:74.75px;top:244.55px;font-size:6.8px;color:#1e1e1e;">2008</div>
<div class="t g" style="left:116.25px;top:244.55px;font-size:6.8px;color:#1e1e1e;">2008-02</div>
<div class="t g" style="left:168.25px;top:244.55px;font-size:6.8px;color:#1e1e1e;">2008-05</div>
<div class="t g" style="left:220.25px;top:244.55px;font-size:6.8px;color:#1e1e1e;">01</div>
<div class="t g" style="left:278.75px;top:244.55px;font-size:6.8px;color:#1e1e1e;transform:scale(0.91,1.1)">B-VEVŐ</div>
<div class="t g" style="left:371.75px;top:244.55px;font-size:6.8px;color:#1e1e1e;transform:scale(0.96,1.1)">Vevői befizetés</div>
<div class="a" style="left:3.5px;top:255.25px;width:18.5px;height:12.5px;background:linear-gradient(90deg,#f3f2ea,#ecebe0);border-bottom:1px solid #dcd9cc;border-right:1px solid #e2dfd2"></div>
<div class="t" style="left:5.8px;top:259.15px;font-size:7.2px;color:#303030;">15</div>
<div class="a" style="left:22px;top:255.25px;width:495px;height:12.5px;background:#fdfdfd"></div>
<div class="a" style="left:71.5px;top:255.25px;width:1px;height:12.5px;background:#efefef"></div>
<div class="a" style="left:113.0px;top:255.25px;width:1px;height:12.5px;background:#efefef"></div>
<div class="a" style="left:165.0px;top:255.25px;width:1px;height:12.5px;background:#efefef"></div>
<div class="a" style="left:217.0px;top:255.25px;width:1px;height:12.5px;background:#efefef"></div>
<div class="a" style="left:275.5px;top:255.25px;width:1px;height:12.5px;background:#efefef"></div>
<div class="a" style="left:368.5px;top:255.25px;width:1px;height:12.5px;background:#efefef"></div>
<div class="a" style="left:484.0px;top:255.25px;width:1px;height:12.5px;background:#efefef"></div>
<div class="t g" style="left:24.75px;top:257.05px;font-size:6.8px;color:#1e1e1e;">2008-02-01</div>
<div class="t g" style="left:74.75px;top:257.05px;font-size:6.8px;color:#1e1e1e;">2008</div>
<div class="t g" style="left:116.25px;top:257.05px;font-size:6.8px;color:#1e1e1e;">2008-02</div>
<div class="t g" style="left:168.25px;top:257.05px;font-size:6.8px;color:#1e1e1e;">2008-05</div>
<div class="t g" style="left:220.25px;top:257.05px;font-size:6.8px;color:#1e1e1e;">02</div>
<div class="t g" style="left:278.75px;top:257.05px;font-size:6.8px;color:#1e1e1e;transform:scale(0.91,1.1)">B-VEVŐ</div>
<div class="t g" style="left:371.75px;top:257.05px;font-size:6.8px;color:#1e1e1e;transform:scale(0.96,1.1)">Vevői befizetés</div>
<div class="a" style="left:484.5px;top:257.45px;width:32.5px;height:9px;overflow:hidden"><div class="t" style="right:-5.5px;top:1px;font-size:6.8px;color:#1e1e1e">1 000</div></div>
<div class="a" style="left:3.5px;top:267.75px;width:18.5px;height:12.5px;background:linear-gradient(90deg,#f3f2ea,#ecebe0);border-bottom:1px solid #dcd9cc;border-right:1px solid #e2dfd2"></div>
<div class="t" style="left:5.8px;top:271.65px;font-size:7.2px;color:#303030;">16</div>
<div class="a" style="left:22px;top:267.75px;width:495px;height:12.5px;background:#e9e9e9"></div>
<div class="a" style="left:71.5px;top:267.75px;width:1px;height:12.5px;background:#f4f4f4"></div>
<div class="a" style="left:113.0px;top:267.75px;width:1px;height:12.5px;background:#f4f4f4"></div>
<div class="a" style="left:165.0px;top:267.75px;width:1px;height:12.5px;background:#f4f4f4"></div>
<div class="a" style="left:217.0px;top:267.75px;width:1px;height:12.5px;background:#f4f4f4"></div>
<div class="a" style="left:275.5px;top:267.75px;width:1px;height:12.5px;background:#f4f4f4"></div>
<div class="a" style="left:368.5px;top:267.75px;width:1px;height:12.5px;background:#f4f4f4"></div>
<div class="a" style="left:484.0px;top:267.75px;width:1px;height:12.5px;background:#f4f4f4"></div>
<div class="t g" style="left:24.75px;top:269.55px;font-size:6.8px;color:#1e1e1e;">2008-02-02</div>
<div class="t g" style="left:74.75px;top:269.55px;font-size:6.8px;color:#1e1e1e;">2008</div>
<div class="t g" style="left:116.25px;top:269.55px;font-size:6.8px;color:#1e1e1e;">2008-02</div>
<div class="t g" style="left:168.25px;top:269.55px;font-size:6.8px;color:#1e1e1e;">2008-05</div>
<div class="t g" style="left:220.25px;top:269.55px;font-size:6.8px;color:#1e1e1e;">02</div>
<div class="t g" style="left:278.75px;top:269.55px;font-size:6.8px;color:#1e1e1e;transform:scale(0.91,1.1)">B-VEVŐ</div>
<div class="t g" style="left:371.75px;top:269.55px;font-size:6.8px;color:#1e1e1e;transform:scale(0.96,1.1)">Vevői befizetés</div>
<div class="a" style="left:3.5px;top:280.25px;width:18.5px;height:12.5px;background:linear-gradient(90deg,#f3f2ea,#ecebe0);border-bottom:1px solid #dcd9cc;border-right:1px solid #e2dfd2"></div>
<div class="t" style="left:5.8px;top:284.15px;font-size:7.2px;color:#303030;">17</div>
<div class="a" style="left:22px;top:280.25px;width:495px;height:12.5px;background:#fdfdfd"></div>
<div class="a" style="left:71.5px;top:280.25px;width:1px;height:12.5px;background:#efefef"></div>
<div class="a" style="left:113.0px;top:280.25px;width:1px;height:12.5px;background:#efefef"></div>
<div class="a" style="left:165.0px;top:280.25px;width:1px;height:12.5px;background:#efefef"></div>
<div class="a" style="left:217.0px;top:280.25px;width:1px;height:12.5px;background:#efefef"></div>
<div class="a" style="left:275.5px;top:280.25px;width:1px;height:12.5px;background:#efefef"></div>
<div class="a" style="left:368.5px;top:280.25px;width:1px;height:12.5px;background:#efefef"></div>
<div class="a" style="left:484.0px;top:280.25px;width:1px;height:12.5px;background:#efefef"></div>
<div class="t g" style="left:24.75px;top:282.05px;font-size:6.8px;color:#1e1e1e;">2008-02-02</div>
<div class="t g" style="left:74.75px;top:282.05px;font-size:6.8px;color:#1e1e1e;">2008</div>
<div class="t g" style="left:116.25px;top:282.05px;font-size:6.8px;color:#1e1e1e;">2008-02</div>
<div class="t g" style="left:168.25px;top:282.05px;font-size:6.8px;color:#1e1e1e;">2008-05</div>
<div class="t g" style="left:220.25px;top:282.05px;font-size:6.8px;color:#1e1e1e;">02</div>
<div class="t g" style="left:278.75px;top:282.05px;font-size:6.8px;color:#1e1e1e;transform:scale(0.91,1.1)">B-VEVŐ</div>
<div class="t g" style="left:371.75px;top:282.05px;font-size:6.8px;color:#1e1e1e;transform:scale(0.96,1.1)">Vevői befizetés</div>
<div class="a" style="left:484.5px;top:282.45px;width:32.5px;height:9px;overflow:hidden"><div class="t" style="right:-5.5px;top:1px;font-size:6.8px;color:#1e1e1e">1 000</div></div>
<div class="a" style="left:3.5px;top:292.75px;width:18.5px;height:12.5px;background:linear-gradient(90deg,#f3f2ea,#ecebe0);border-bottom:1px solid #dcd9cc;border-right:1px solid #e2dfd2"></div>
<div class="t" style="left:5.8px;top:296.65px;font-size:7.2px;color:#303030;">18</div>
<div class="a" style="left:22px;top:292.75px;width:495px;height:12.5px;background:#fcb7fc"></div>
<div class="a" style="left:71.5px;top:292.75px;width:1px;height:12.5px;background:#fdd0fd"></div>
<div class="a" style="left:113.0px;top:292.75px;width:1px;height:12.5px;background:#fdd0fd"></div>
<div class="a" style="left:165.0px;top:292.75px;width:1px;height:12.5px;background:#fdd0fd"></div>
<div class="a" style="left:217.0px;top:292.75px;width:1px;height:12.5px;background:#fdd0fd"></div>
<div class="a" style="left:275.5px;top:292.75px;width:1px;height:12.5px;background:#fdd0fd"></div>
<div class="a" style="left:368.5px;top:292.75px;width:1px;height:12.5px;background:#fdd0fd"></div>
<div class="a" style="left:484.0px;top:292.75px;width:1px;height:12.5px;background:#fdd0fd"></div>
<div class="t g" style="left:169.0px;top:295.15000000000003px;font-size:6.8px;color:#4a1f52">2008-05 Össz:</div>
<div class="a" style="left:484.5px;top:294.95px;width:32.5px;height:9px;overflow:hidden"><div class="t" style="right:-5.5px;top:1px;font-size:6.8px;color:#4a1f52">2 140</div></div>
<div class="a" style="left:3.5px;top:305.25px;width:18.5px;height:12.5px;background:linear-gradient(90deg,#f3f2ea,#ecebe0);border-bottom:1px solid #dcd9cc;border-right:1px solid #e2dfd2"></div>
<div class="t" style="left:5.8px;top:309.15px;font-size:7.2px;color:#303030;">19</div>
<div class="a" style="left:22px;top:305.25px;width:495px;height:12.5px;background:#fdfdfd"></div>
<div class="a" style="left:71.5px;top:305.25px;width:1px;height:12.5px;background:#efefef"></div>
<div class="a" style="left:113.0px;top:305.25px;width:1px;height:12.5px;background:#efefef"></div>
<div class="a" style="left:165.0px;top:305.25px;width:1px;height:12.5px;background:#efefef"></div>
<div class="a" style="left:217.0px;top:305.25px;width:1px;height:12.5px;background:#efefef"></div>
<div class="a" style="left:275.5px;top:305.25px;width:1px;height:12.5px;background:#efefef"></div>
<div class="a" style="left:368.5px;top:305.25px;width:1px;height:12.5px;background:#efefef"></div>
<div class="a" style="left:484.0px;top:305.25px;width:1px;height:12.5px;background:#efefef"></div>
<div class="t g" style="left:24.75px;top:307.05px;font-size:6.8px;color:#1e1e1e;">2008-02-05</div>
<div class="t g" style="left:74.75px;top:307.05px;font-size:6.8px;color:#1e1e1e;">2008</div>
<div class="t g" style="left:116.25px;top:307.05px;font-size:6.8px;color:#1e1e1e;">2008-02</div>
<div class="t g" style="left:168.25px;top:307.05px;font-size:6.8px;color:#1e1e1e;">2008-06</div>
<div class="t g" style="left:220.25px;top:307.05px;font-size:6.8px;color:#1e1e1e;">01</div>
<div class="t g" style="left:278.75px;top:307.05px;font-size:6.8px;color:#1e1e1e;transform:scale(0.91,1.1)">B-VEVŐ</div>
<div class="t g" style="left:371.75px;top:307.05px;font-size:6.8px;color:#1e1e1e;transform:scale(0.96,1.1)">Vevői befizetés</div>
<div class="a" style="left:3.5px;top:317.75px;width:18.5px;height:12.5px;background:linear-gradient(90deg,#f3f2ea,#ecebe0);border-bottom:1px solid #dcd9cc;border-right:1px solid #e2dfd2"></div>
<div class="t" style="left:5.8px;top:321.65px;font-size:7.2px;color:#303030;">20</div>
<div class="a" style="left:22px;top:317.75px;width:495px;height:12.5px;background:#e9e9e9"></div>
<div class="a" style="left:71.5px;top:317.75px;width:1px;height:12.5px;background:#f4f4f4"></div>
<div class="a" style="left:113.0px;top:317.75px;width:1px;height:12.5px;background:#f4f4f4"></div>
<div class="a" style="left:165.0px;top:317.75px;width:1px;height:12.5px;background:#f4f4f4"></div>
<div class="a" style="left:217.0px;top:317.75px;width:1px;height:12.5px;background:#f4f4f4"></div>
<div class="a" style="left:275.5px;top:317.75px;width:1px;height:12.5px;background:#f4f4f4"></div>
<div class="a" style="left:368.5px;top:317.75px;width:1px;height:12.5px;background:#f4f4f4"></div>
<div class="a" style="left:484.0px;top:317.75px;width:1px;height:12.5px;background:#f4f4f4"></div>
<div class="t g" style="left:24.75px;top:319.55px;font-size:6.8px;color:#1e1e1e;">2008-02-05</div>
<div class="t g" style="left:74.75px;top:319.55px;font-size:6.8px;color:#1e1e1e;">2008</div>
<div class="t g" style="left:116.25px;top:319.55px;font-size:6.8px;color:#1e1e1e;">2008-02</div>
<div class="t g" style="left:168.25px;top:319.55px;font-size:6.8px;color:#1e1e1e;">2008-06</div>
<div class="t g" style="left:220.25px;top:319.55px;font-size:6.8px;color:#1e1e1e;">1</div>
<div class="t g" style="left:278.75px;top:319.55px;font-size:6.8px;color:#1e1e1e;transform:scale(0.91,1.1)">P-BEFIZETÉS</div>
<div class="t g" style="left:371.75px;top:319.55px;font-size:6.8px;color:#1e1e1e;transform:scale(0.96,1.1)">Pénztárba befizetés</div>
<div class="a" style="left:3.5px;top:330.25px;width:18.5px;height:12.5px;background:linear-gradient(90deg,#f3f2ea,#ecebe0);border-bottom:1px solid #dcd9cc;border-right:1px solid #e2dfd2"></div>
<div class="t" style="left:5.8px;top:334.15px;font-size:7.2px;color:#303030;">21</div>
<div class="a" style="left:22px;top:330.25px;width:495px;height:12.5px;background:#fdfdfd"></div>
<div class="a" style="left:71.5px;top:330.25px;width:1px;height:12.5px;background:#efefef"></div>
<div class="a" style="left:113.0px;top:330.25px;width:1px;height:12.5px;background:#efefef"></div>
<div class="a" style="left:165.0px;top:330.25px;width:1px;height:12.5px;background:#efefef"></div>
<div class="a" style="left:217.0px;top:330.25px;width:1px;height:12.5px;background:#efefef"></div>
<div class="a" style="left:275.5px;top:330.25px;width:1px;height:12.5px;background:#efefef"></div>
<div class="a" style="left:368.5px;top:330.25px;width:1px;height:12.5px;background:#efefef"></div>
<div class="a" style="left:484.0px;top:330.25px;width:1px;height:12.5px;background:#efefef"></div>
<div class="t g" style="left:24.75px;top:332.05px;font-size:6.8px;color:#1e1e1e;">2008-02-05</div>
<div class="t g" style="left:74.75px;top:332.05px;font-size:6.8px;color:#1e1e1e;">2008</div>
<div class="t g" style="left:116.25px;top:332.05px;font-size:6.8px;color:#1e1e1e;">2008-02</div>
<div class="t g" style="left:168.25px;top:332.05px;font-size:6.8px;color:#1e1e1e;">2008-06</div>
<div class="t g" style="left:220.25px;top:332.05px;font-size:6.8px;color:#1e1e1e;">01</div>
<div class="t g" style="left:278.75px;top:332.05px;font-size:6.8px;color:#1e1e1e;transform:scale(0.91,1.1)">B-SZÁLLÍTÓ</div>
<div class="t g" style="left:371.75px;top:332.05px;font-size:6.8px;color:#1e1e1e;transform:scale(0.96,1.1)">Szállító kiegyenlítése</div>
<div class="a" style="left:3.5px;top:342.75px;width:18.5px;height:12.5px;background:linear-gradient(90deg,#f3f2ea,#ecebe0);border-bottom:1px solid #dcd9cc;border-right:1px solid #e2dfd2"></div>
<div class="t" style="left:5.8px;top:346.65px;font-size:7.2px;color:#303030;">22</div>
<div class="a" style="left:22px;top:342.75px;width:495px;height:12.5px;background:#e9e9e9"></div>
<div class="a" style="left:71.5px;top:342.75px;width:1px;height:12.5px;background:#f4f4f4"></div>
<div class="a" style="left:113.0px;top:342.75px;width:1px;height:12.5px;background:#f4f4f4"></div>
<div class="a" style="left:165.0px;top:342.75px;width:1px;height:12.5px;background:#f4f4f4"></div>
<div class="a" style="left:217.0px;top:342.75px;width:1px;height:12.5px;background:#f4f4f4"></div>
<div class="a" style="left:275.5px;top:342.75px;width:1px;height:12.5px;background:#f4f4f4"></div>
<div class="a" style="left:368.5px;top:342.75px;width:1px;height:12.5px;background:#f4f4f4"></div>
<div class="a" style="left:484.0px;top:342.75px;width:1px;height:12.5px;background:#f4f4f4"></div>
<div class="t g" style="left:24.75px;top:344.55px;font-size:6.8px;color:#1e1e1e;">2008-02-05</div>
<div class="t g" style="left:74.75px;top:344.55px;font-size:6.8px;color:#1e1e1e;">2008</div>
<div class="t g" style="left:116.25px;top:344.55px;font-size:6.8px;color:#1e1e1e;">2008-02</div>
<div class="t g" style="left:168.25px;top:344.55px;font-size:6.8px;color:#1e1e1e;">2008-06</div>
<div class="t g" style="left:220.25px;top:344.55px;font-size:6.8px;color:#1e1e1e;">01</div>
<div class="t g" style="left:278.75px;top:344.55px;font-size:6.8px;color:#1e1e1e;transform:scale(0.91,1.1)">B-SZÁLLÍTÓ</div>
<div class="t g" style="left:371.75px;top:344.55px;font-size:6.8px;color:#1e1e1e;transform:scale(0.96,1.1)">Szállító kiegyenlítése</div>
<div class="a" style="left:3.5px;top:355.25px;width:18.5px;height:12.5px;background:linear-gradient(90deg,#f3f2ea,#ecebe0);border-bottom:1px solid #dcd9cc;border-right:1px solid #e2dfd2"></div>
<div class="t" style="left:5.8px;top:359.15px;font-size:7.2px;color:#303030;">23</div>
<div class="a" style="left:22px;top:355.25px;width:495px;height:12.5px;background:#fdfdfd"></div>
<div class="a" style="left:71.5px;top:355.25px;width:1px;height:12.5px;background:#efefef"></div>
<div class="a" style="left:113.0px;top:355.25px;width:1px;height:12.5px;background:#efefef"></div>
<div class="a" style="left:165.0px;top:355.25px;width:1px;height:12.5px;background:#efefef"></div>
<div class="a" style="left:217.0px;top:355.25px;width:1px;height:12.5px;background:#efefef"></div>
<div class="a" style="left:275.5px;top:355.25px;width:1px;height:12.5px;background:#efefef"></div>
<div class="a" style="left:368.5px;top:355.25px;width:1px;height:12.5px;background:#efefef"></div>
<div class="a" style="left:484.0px;top:355.25px;width:1px;height:12.5px;background:#efefef"></div>
<div class="t g" style="left:24.75px;top:357.05px;font-size:6.8px;color:#1e1e1e;">2008-02-06</div>
<div class="t g" style="left:74.75px;top:357.05px;font-size:6.8px;color:#1e1e1e;">2008</div>
<div class="t g" style="left:116.25px;top:357.05px;font-size:6.8px;color:#1e1e1e;">2008-02</div>
<div class="t g" style="left:168.25px;top:357.05px;font-size:6.8px;color:#1e1e1e;">2008-06</div>
<div class="t g" style="left:220.25px;top:357.05px;font-size:6.8px;color:#1e1e1e;">01</div>
<div class="t g" style="left:278.75px;top:357.05px;font-size:6.8px;color:#1e1e1e;transform:scale(0.91,1.1)">B-VEVŐ</div>
<div class="t g" style="left:371.75px;top:357.05px;font-size:6.8px;color:#1e1e1e;transform:scale(0.96,1.1)">Vevői befizetés</div>
<div class="a" style="left:484.5px;top:357.45px;width:32.5px;height:9px;overflow:hidden"><div class="t" style="right:-5.5px;top:1px;font-size:6.8px;color:#1e1e1e">1 000</div></div>
<div class="a" style="left:3.5px;top:367.75px;width:18.5px;height:12.5px;background:linear-gradient(90deg,#f3f2ea,#ecebe0);border-bottom:1px solid #dcd9cc;border-right:1px solid #e2dfd2"></div>
<div class="t" style="left:5.8px;top:371.65px;font-size:7.2px;color:#303030;">24</div>
<div class="a" style="left:22px;top:367.75px;width:495px;height:12.5px;background:#fcb7fc"></div>
<div class="a" style="left:71.5px;top:367.75px;width:1px;height:12.5px;background:#fdd0fd"></div>
<div class="a" style="left:113.0px;top:367.75px;width:1px;height:12.5px;background:#fdd0fd"></div>
<div class="a" style="left:165.0px;top:367.75px;width:1px;height:12.5px;background:#fdd0fd"></div>
<div class="a" style="left:217.0px;top:367.75px;width:1px;height:12.5px;background:#fdd0fd"></div>
<div class="a" style="left:275.5px;top:367.75px;width:1px;height:12.5px;background:#fdd0fd"></div>
<div class="a" style="left:368.5px;top:367.75px;width:1px;height:12.5px;background:#fdd0fd"></div>
<div class="a" style="left:484.0px;top:367.75px;width:1px;height:12.5px;background:#fdd0fd"></div>
<div class="t g" style="left:169.0px;top:370.15000000000003px;font-size:6.8px;color:#4a1f52">2008-06 Össz:</div>
<div class="a" style="left:484.5px;top:369.95px;width:32.5px;height:9px;overflow:hidden"><div class="t" style="right:-5.5px;top:1px;font-size:6.8px;color:#4a1f52">1 000</div></div>
<div class="a" style="left:3.5px;top:380.25px;width:18.5px;height:12.5px;background:linear-gradient(90deg,#f3f2ea,#ecebe0);border-bottom:1px solid #dcd9cc;border-right:1px solid #e2dfd2"></div>
<div class="t" style="left:5.8px;top:384.15px;font-size:7.2px;color:#303030;">25</div>
<div class="a" style="left:22px;top:380.25px;width:495px;height:12.5px;background:#fdfdfd"></div>
<div class="a" style="left:71.5px;top:380.25px;width:1px;height:12.5px;background:#efefef"></div>
<div class="a" style="left:113.0px;top:380.25px;width:1px;height:12.5px;background:#efefef"></div>
<div class="a" style="left:165.0px;top:380.25px;width:1px;height:12.5px;background:#efefef"></div>
<div class="a" style="left:217.0px;top:380.25px;width:1px;height:12.5px;background:#efefef"></div>
<div class="a" style="left:275.5px;top:380.25px;width:1px;height:12.5px;background:#efefef"></div>
<div class="a" style="left:368.5px;top:380.25px;width:1px;height:12.5px;background:#efefef"></div>
<div class="a" style="left:484.0px;top:380.25px;width:1px;height:12.5px;background:#efefef"></div>
<div class="t g" style="left:24.75px;top:382.05px;font-size:6.8px;color:#1e1e1e;">2008-02-11</div>
<div class="t g" style="left:74.75px;top:382.05px;font-size:6.8px;color:#1e1e1e;">2008</div>
<div class="t g" style="left:116.25px;top:382.05px;font-size:6.8px;color:#1e1e1e;">2008-02</div>
<div class="t g" style="left:168.25px;top:382.05px;font-size:6.8px;color:#1e1e1e;">2008-07</div>
<div class="t g" style="left:220.25px;top:382.05px;font-size:6.8px;color:#1e1e1e;">1</div>
<div class="t g" style="left:278.75px;top:382.05px;font-size:6.8px;color:#1e1e1e;transform:scale(0.91,1.1)">P-BEFIZETÉS</div>
<div class="t g" style="left:371.75px;top:382.05px;font-size:6.8px;color:#1e1e1e;transform:scale(0.96,1.1)">Pénztárba befizetés</div>
<div class="a" style="left:484.5px;top:382.45px;width:32.5px;height:9px;overflow:hidden"><div class="t" style="right:-5.5px;top:1px;font-size:6.8px;color:#1e1e1e">140</div></div>
<div class="a" style="left:3.5px;top:392.75px;width:18.5px;height:12.5px;background:linear-gradient(90deg,#f3f2ea,#ecebe0);border-bottom:1px solid #dcd9cc;border-right:1px solid #e2dfd2"></div>
<div class="t" style="left:5.8px;top:396.65px;font-size:7.2px;color:#303030;">26</div>
<div class="a" style="left:22px;top:392.75px;width:495px;height:12.5px;background:#e9e9e9"></div>
<div class="a" style="left:71.5px;top:392.75px;width:1px;height:12.5px;background:#f4f4f4"></div>
<div class="a" style="left:113.0px;top:392.75px;width:1px;height:12.5px;background:#f4f4f4"></div>
<div class="a" style="left:165.0px;top:392.75px;width:1px;height:12.5px;background:#f4f4f4"></div>
<div class="a" style="left:217.0px;top:392.75px;width:1px;height:12.5px;background:#f4f4f4"></div>
<div class="a" style="left:275.5px;top:392.75px;width:1px;height:12.5px;background:#f4f4f4"></div>
<div class="a" style="left:368.5px;top:392.75px;width:1px;height:12.5px;background:#f4f4f4"></div>
<div class="a" style="left:484.0px;top:392.75px;width:1px;height:12.5px;background:#f4f4f4"></div>
<div class="t g" style="left:24.75px;top:394.55px;font-size:6.8px;color:#1e1e1e;">2008-02-11</div>
<div class="t g" style="left:74.75px;top:394.55px;font-size:6.8px;color:#1e1e1e;">2008</div>
<div class="t g" style="left:116.25px;top:394.55px;font-size:6.8px;color:#1e1e1e;">2008-02</div>
<div class="t g" style="left:168.25px;top:394.55px;font-size:6.8px;color:#1e1e1e;">2008-07</div>
<div class="t g" style="left:220.25px;top:394.55px;font-size:6.8px;color:#1e1e1e;">1</div>
<div class="t g" style="left:278.75px;top:394.55px;font-size:6.8px;color:#1e1e1e;transform:scale(0.91,1.1)">P-BEFIZETÉS</div>
<div class="t g" style="left:371.75px;top:394.55px;font-size:6.8px;color:#1e1e1e;transform:scale(0.96,1.1)">Pénztárba befizetés</div>
<div class="a" style="left:484.5px;top:394.95px;width:32.5px;height:9px;overflow:hidden"><div class="t" style="right:-5.5px;top:1px;font-size:6.8px;color:#1e1e1e">150</div></div>
<div class="a" style="left:3.5px;top:405.25px;width:18.5px;height:12.5px;background:linear-gradient(90deg,#f3f2ea,#ecebe0);border-bottom:1px solid #dcd9cc;border-right:1px solid #e2dfd2"></div>
<div class="t" style="left:5.8px;top:409.15px;font-size:7.2px;color:#303030;">27</div>
<div class="a" style="left:22px;top:405.25px;width:495px;height:12.5px;background:#fcb7fc"></div>
<div class="a" style="left:71.5px;top:405.25px;width:1px;height:12.5px;background:#fdd0fd"></div>
<div class="a" style="left:113.0px;top:405.25px;width:1px;height:12.5px;background:#fdd0fd"></div>
<div class="a" style="left:165.0px;top:405.25px;width:1px;height:12.5px;background:#fdd0fd"></div>
<div class="a" style="left:217.0px;top:405.25px;width:1px;height:12.5px;background:#fdd0fd"></div>
<div class="a" style="left:275.5px;top:405.25px;width:1px;height:12.5px;background:#fdd0fd"></div>
<div class="a" style="left:368.5px;top:405.25px;width:1px;height:12.5px;background:#fdd0fd"></div>
<div class="a" style="left:484.0px;top:405.25px;width:1px;height:12.5px;background:#fdd0fd"></div>
<div class="t g" style="left:169.0px;top:407.65000000000003px;font-size:6.8px;color:#4a1f52">2008-07 Össz:</div>
<div class="a" style="left:484.5px;top:407.45px;width:32.5px;height:9px;overflow:hidden"><div class="t" style="right:-5.5px;top:1px;font-size:6.8px;color:#4a1f52">290</div></div>
<div class="a" style="left:3.5px;top:417.75px;width:18.5px;height:12.5px;background:linear-gradient(90deg,#f3f2ea,#ecebe0);border-bottom:1px solid #dcd9cc;border-right:1px solid #e2dfd2"></div>
<div class="t" style="left:5.8px;top:421.65px;font-size:7.2px;color:#303030;">28</div>
<div class="a" style="left:22px;top:417.75px;width:495px;height:12.5px;background:#e9e9e9"></div>
<div class="a" style="left:71.5px;top:417.75px;width:1px;height:12.5px;background:#f4f4f4"></div>
<div class="a" style="left:113.0px;top:417.75px;width:1px;height:12.5px;background:#f4f4f4"></div>
<div class="a" style="left:165.0px;top:417.75px;width:1px;height:12.5px;background:#f4f4f4"></div>
<div class="a" style="left:217.0px;top:417.75px;width:1px;height:12.5px;background:#f4f4f4"></div>
<div class="a" style="left:275.5px;top:417.75px;width:1px;height:12.5px;background:#f4f4f4"></div>
<div class="a" style="left:368.5px;top:417.75px;width:1px;height:12.5px;background:#f4f4f4"></div>
<div class="a" style="left:484.0px;top:417.75px;width:1px;height:12.5px;background:#f4f4f4"></div>
<div class="t g" style="left:24.75px;top:419.55px;font-size:6.8px;color:#1e1e1e;">2008-02-20</div>
<div class="t g" style="left:74.75px;top:419.55px;font-size:6.8px;color:#1e1e1e;">2008</div>
<div class="t g" style="left:116.25px;top:419.55px;font-size:6.8px;color:#1e1e1e;">2008-02</div>
<div class="t g" style="left:168.25px;top:419.55px;font-size:6.8px;color:#1e1e1e;">2008-08</div>
<div class="t g" style="left:220.25px;top:419.55px;font-size:6.8px;color:#1e1e1e;">01</div>
<div class="t g" style="left:278.75px;top:419.55px;font-size:6.8px;color:#1e1e1e;transform:scale(0.91,1.1)">B-VEVŐ</div>
<div class="t g" style="left:371.75px;top:419.55px;font-size:6.8px;color:#1e1e1e;transform:scale(0.96,1.1)">Vevői befizetés</div>
<div class="a" style="left:484.5px;top:419.95px;width:32.5px;height:9px;overflow:hidden"><div class="t" style="right:-5.5px;top:1px;font-size:6.8px;color:#1e1e1e">5 020</div></div>
<div class="a" style="left:3.5px;top:430.25px;width:18.5px;height:12.5px;background:linear-gradient(90deg,#f3f2ea,#ecebe0);border-bottom:1px solid #dcd9cc;border-right:1px solid #e2dfd2"></div>
<div class="t" style="left:5.8px;top:434.15px;font-size:7.2px;color:#303030;">29</div>
<div class="a" style="left:22px;top:430.25px;width:495px;height:12.5px;background:#fcb7fc"></div>
<div class="a" style="left:71.5px;top:430.25px;width:1px;height:12.5px;background:#fdd0fd"></div>
<div class="a" style="left:113.0px;top:430.25px;width:1px;height:12.5px;background:#fdd0fd"></div>
<div class="a" style="left:165.0px;top:430.25px;width:1px;height:12.5px;background:#fdd0fd"></div>
<div class="a" style="left:217.0px;top:430.25px;width:1px;height:12.5px;background:#fdd0fd"></div>
<div class="a" style="left:275.5px;top:430.25px;width:1px;height:12.5px;background:#fdd0fd"></div>
<div class="a" style="left:368.5px;top:430.25px;width:1px;height:12.5px;background:#fdd0fd"></div>
<div class="a" style="left:484.0px;top:430.25px;width:1px;height:12.5px;background:#fdd0fd"></div>
<div class="t g" style="left:169.0px;top:432.65000000000003px;font-size:6.8px;color:#4a1f52">2008-08 Össz:</div>
<div class="a" style="left:484.5px;top:432.45px;width:32.5px;height:9px;overflow:hidden"><div class="t" style="right:-5.5px;top:1px;font-size:6.8px;color:#4a1f52">5 020</div></div>
<div class="a" style="left:3.5px;top:442.75px;width:18.5px;height:12.5px;background:linear-gradient(90deg,#f3f2ea,#ecebe0);border-bottom:1px solid #dcd9cc;border-right:1px solid #e2dfd2"></div>
<div class="t" style="left:5.8px;top:446.65px;font-size:7.2px;color:#303030;">30</div>
<div class="a" style="left:22px;top:442.75px;width:495px;height:12.5px;background:#fcb7fc"></div>
<div class="a" style="left:71.5px;top:442.75px;width:1px;height:12.5px;background:#fdd0fd"></div>
<div class="a" style="left:113.0px;top:442.75px;width:1px;height:12.5px;background:#fdd0fd"></div>
<div class="a" style="left:165.0px;top:442.75px;width:1px;height:12.5px;background:#fdd0fd"></div>
<div class="a" style="left:217.0px;top:442.75px;width:1px;height:12.5px;background:#fdd0fd"></div>
<div class="a" style="left:275.5px;top:442.75px;width:1px;height:12.5px;background:#fdd0fd"></div>
<div class="a" style="left:368.5px;top:442.75px;width:1px;height:12.5px;background:#fdd0fd"></div>
<div class="a" style="left:484.0px;top:442.75px;width:1px;height:12.5px;background:#fdd0fd"></div>
<div class="t g" style="left:117.0px;top:444.95px;font-size:6.8px;color:#4a1f52">2008-02 Össz:</div>
<div class="a" style="left:484.5px;top:444.95px;width:32.5px;height:9px;overflow:hidden"><div class="t" style="right:-5.5px;top:1px;font-size:6.8px;color:#4a1f52">8 460</div></div>
<div class="a" style="left:517.5px;top:69px;width:10px;height:387px;background:#fbfbf9"></div>
<div class="a" style="left:518px;top:69.5px;width:9px;height:8.5px;border-radius:1.5px;background:linear-gradient(90deg,#c8d8fa,#b7cbf6);border:0.5px solid #b0c4f0"></div>
<svg class="a" style="left:518px;top:69.5px" width="9" height="8.5"><path d="M2.3 5.6 L4.5 3.3 L6.7 5.6" fill="none" stroke="#4d6185" stroke-width="1.3"/></svg>
<div class="a" style="left:518px;top:78px;width:9px;height:20.5px;border-radius:1.5px;background:linear-gradient(90deg,#cad9fb,#b9ccf6);border:0.5px solid #aec2ee"></div>
<div class="a" style="left:518px;top:446px;width:9px;height:9.5px;border-radius:1.5px;background:linear-gradient(90deg,#c8d8fa,#b7cbf6);border:0.5px solid #b0c4f0"></div>
<svg class="a" style="left:518px;top:446px" width="9" height="9.5"><path d="M2.3 3.6 L4.5 5.9 L6.7 3.6" fill="none" stroke="#4d6185" stroke-width="1.3"/></svg>
<div class="a" style="left:3px;top:456px;width:525px;height:10.5px;background:#fcfcfb"></div>
<div class="a" style="left:4.5px;top:457px;width:9px;height:9px;border-radius:1.5px;background:linear-gradient(#c8d8fa,#b7cbf6);border:0.5px solid #b0c4f0"></div>
<svg class="a" style="left:4.5px;top:457px" width="9" height="9"><path d="M5.6 2.3 L3.3 4.5 L5.6 6.7" fill="none" stroke="#4d6185" stroke-width="1.3"/></svg>
<div class="a" style="left:14.5px;top:457px;width:170px;height:9px;border-radius:1.5px;background:linear-gradient(#cddcfb,#b8cbf5);border:0.5px solid #b0c4f0"></div>
<div class="a" style="left:96px;top:459.5px;width:5px;height:4px;background:repeating-linear-gradient(90deg,#e8f0ff 0 1px,#a8bce8 1px 2px)"></div>
<div class="a" style="left:507px;top:457px;width:10px;height:9px;border-radius:1.5px;background:linear-gradient(#c8d8fa,#b7cbf6);border:0.5px solid #b0c4f0"></div>
<svg class="a" style="left:507px;top:457px" width="10" height="9"><path d="M3.9 2.3 L6.2 4.5 L3.9 6.7" fill="none" stroke="#4d6185" stroke-width="1.3"/></svg>
<div class="t" style="left:4px;top:471px;font-size:7px;color:#222">+2.0.57 ar1145 E &nbsp;1 / 552</div>
<div class="a" style="left:137.5px;top:468px;width:1px;height:11px;background:#cfcbb8"></div>
<div class="a" style="left:141px;top:469.5px;width:8px;height:8px;border-radius:50%;border:1px solid #8a8a8a;background:#f4f4f0"></div>
<div class="t" style="left:157.5px;top:471px;font-size:6.6px;color:#222">A pénzmozgás pénznem kódja</div>
<div class="t" style="left:182px;top:59px;font-size:6.8px;color:#222">D. szűrés?</div>
<div class="a" style="left:215.5px;top:57px;width:8.5px;height:8.5px;border:1px solid #8ca4c4;background:linear-gradient(135deg,#e4e4df,#fff)"></div>
<div class="a" style="left:230.3px;top:54.2px;width:42.19999999999999px;height:12.899999999999991px;border:1px solid #dcd9cc;border-radius:2px;background:linear-gradient(#fdfdfb,#f4f3ee 70%,#eceae0)"></div>
<div class="t g" style="left:230.3px;top:57.5px;width:42.19999999999999px;text-align:center;font-size:6.8px;color:#96948a">Múlt hónap</div>
<div class="a" style="left:274px;top:54.2px;width:35px;height:12.899999999999991px;border:1px solid #dcd9cc;border-radius:2px;background:linear-gradient(#fdfdfb,#f4f3ee 70%,#eceae0)"></div>
<div class="t g" style="left:274px;top:57.5px;width:35px;text-align:center;font-size:6.8px;color:#96948a">Múlt hét</div>
<div class="a" style="left:311px;top:54.2px;width:11px;height:12.899999999999991px;border:1px solid #dcd9cc;border-radius:2px;background:linear-gradient(#fdfdfb,#f4f3ee 70%,#eceae0)"></div>
<div class="t g" style="left:311px;top:57.5px;width:11px;text-align:center;font-size:6.8px;color:#96948a">&lt;</div>
<div class="a" style="left:505px;top:54.2px;width:11.5px;height:12.899999999999991px;border:1px solid #dcd9cc;border-radius:2px;background:linear-gradient(#fdfdfb,#f4f3ee 70%,#eceae0)"></div>
<div class="t g" style="left:505px;top:57.5px;width:11.5px;text-align:center;font-size:6.8px;color:#96948a">&gt;</div>
<div class="a" style="left:518px;top:54.2px;width:22.600000000000023px;height:12.899999999999991px;border:1px solid #dcd9cc;border-radius:2px;background:linear-gradient(#fdfdfb,#f4f3ee 70%,#eceae0)"></div>
<div class="t g" style="left:518px;top:57.5px;width:22.600000000000023px;text-align:center;font-size:6.8px;color:#96948a">Ma</div>
<div class="a" style="left:542px;top:54.2px;width:23px;height:12.899999999999991px;border:1px solid #dcd9cc;border-radius:2px;background:linear-gradient(#fdfdfb,#f4f3ee 70%,#eceae0)"></div>
<div class="t g" style="left:542px;top:57.5px;width:23px;text-align:center;font-size:6.8px;color:#96948a">Hét</div>
<div class="a" style="left:566px;top:54.2px;width:25px;height:12.899999999999991px;border:1px solid #dcd9cc;border-radius:2px;background:linear-gradient(#fdfdfb,#f4f3ee 70%,#eceae0)"></div>
<div class="t g" style="left:566px;top:57.5px;width:25px;text-align:center;font-size:6.8px;color:#96948a">Hónap</div>
<div class="a" style="left:593px;top:54.2px;width:21.799999999999955px;height:12.899999999999991px;border:1px solid #dcd9cc;border-radius:2px;background:linear-gradient(#fdfdfb,#f4f3ee 70%,#eceae0)"></div>
<div class="t g" style="left:593px;top:57.5px;width:21.799999999999955px;text-align:center;font-size:6.8px;color:#96948a">Év</div>
<div class="a" style="left:323.4px;top:54.2px;width:86.30000000000001px;height:12.4px;background:#ffff00;border:0.6px solid #d8d820"></div>
<div class="a" style="left:373px;top:54.2px;width:1px;height:12.4px;background:#e8e880"></div>
<div class="t g" style="left:325.7px;top:57.6px;font-size:6.8px;color:#111">2012-02-19</div>
<div class="t g" style="left:375px;top:57.6px;font-size:6.8px;color:#111">Vasárnap</div>
<div class="t" style="left:412px;top:58px;font-size:6.8px;color:#222">-</div>
<div class="a" style="left:417px;top:54.2px;width:87px;height:12.4px;background:#ffff00;border:0.6px solid #d8d820"></div>
<div class="a" style="left:467px;top:54.2px;width:1px;height:12.4px;background:#e8e880"></div>
<div class="t g" style="left:419.3px;top:57.6px;font-size:6.8px;color:#111">2012-02-19</div>
<div class="t g" style="left:469px;top:57.6px;font-size:6.8px;color:#111">Vasárnap</div>
<div class="a" style="left:527.5px;top:69px;width:3.5px;height:397px;background:linear-gradient(90deg,#f6f5ee,#e9e6d8)"></div>
<div class="a" style="left:531px;top:80px;width:263.5px;height:385px;border:1px solid #c2c4c0;background:linear-gradient(#fcfcfe,#f4f3ee)"></div>
<div class="a" style="left:603px;top:69.8px;width:44px;height:10.7px;border:1px solid #c2c4c0;border-bottom:none;border-radius:2px 2px 0 0;background:linear-gradient(#fff,#ecebe5)"></div>
<div class="t" style="left:609px;top:73.3px;font-size:6.8px;color:#111">Beállítások</div>
<div class="a" style="left:531px;top:68px;width:72.5px;height:13px;border:1px solid #c2c4c0;border-bottom:none;border-top:none;border-radius:2px 2px 0 0;background:#fcfcfe"></div>
<div class="a" style="left:531px;top:67.8px;width:72.5px;height:1.8px;border-radius:2px 2px 0 0;background:linear-gradient(#e8a448,#f6cc78)"></div>
<div class="t" style="left:539px;top:72.6px;font-size:6.8px;color:#111">Általános jellemzők</div>
<div class="a" style="left:534.3px;top:88.8px;width:256.70000000000005px;height:80.2px;border:1px solid #dcdcd0;border-radius:2.5px"></div>
<div class="a" style="left:538.5px;top:85.8px;width:53px;height:6px;background:#fbfbfb"></div>
<div class="t" style="left:540px;top:86.2px;font-size:6.8px;color:#3560b4;-webkit-text-stroke:0">Általános adatok</div>
<div class="t g" style="left:541px;top:103.8px;font-size:6.8px;color:#1a1a1a">Bizonylatszám:</div>
<div class="t g" style="left:541px;top:117.3px;font-size:6.8px;color:#1a1a1a">Külső bizonylat:</div>
<div class="t g" style="left:541px;top:129.8px;font-size:6.8px;color:#1a1a1a">Státusz:</div>
<div class="t g" style="left:541px;top:141.8px;font-size:6.8px;color:#1a1a1a">Partner</div>
<div class="t g" style="left:541px;top:155.3px;font-size:6.8px;color:#1a1a1a">Megjegyzés:</div>
<div class="a" style="left:588.5px;top:99.6px;width:195.5px;height:63.20000000000002px;background:#7aa6e6"></div>
<div class="a" style="left:648px;top:99.6px;width:39.5px;height:38.30000000000001px;background:#fbfbfb"></div>
<div class="a" style="left:588.5px;top:99.6px;width:59.299999999999955px;height:11.800000000000011px;background:#3069c9"></div>
<div class="a" style="left:588.5px;top:99.6px;width:59.299999999999955px;height:11.800000000000011px;overflow:hidden"><div class="t" style="left:2.5px;top:3.5000000000000058px;font-size:6.8px;color:#dbe7ff;-webkit-text-stroke:0.05px">1-PMS-01/2007</div></div>
<div class="a" style="left:588.5px;top:112.6px;width:59.299999999999955px;height:12.400000000000006px;background:#3069c9"></div>
<div class="a" style="left:588.5px;top:126.2px;width:59.299999999999955px;height:11.200000000000003px;background:#2f66c6;border:1px solid #173a86"></div>
<div class="a" style="left:637.8px;top:127.2px;width:9px;height:9.200000000000003px;background:linear-gradient(#2a5cc0,#1b46a0)"></div>
<svg class="a" style="left:637.8px;top:127.2px" width="9" height="9.200000000000003"><path d="M2.4 3.4000000000000012 L6.6 3.4000000000000012 L4.5 5.900000000000001 Z" fill="#fff"/></svg>
<div class="t" style="left:590.5px;top:129.20000000000002px;font-size:6.8px;color:#dbe7ff;-webkit-text-stroke:0.05px">Normál</div>
<div class="a" style="left:588.5px;top:138.6px;width:59.299999999999955px;height:11.599999999999994px;background:#3069c9"></div>
<div class="a" style="left:588.5px;top:138.6px;width:59.299999999999955px;height:11.599999999999994px;overflow:hidden"><div class="t" style="left:2.5px;top:3.3999999999999972px;font-size:6.8px;color:#dbe7ff;-webkit-text-stroke:0.05px">B002</div></div>
<div class="a" style="left:648.8px;top:138.6px;width:135.20000000000005px;height:11.599999999999994px;background:#3069c9"></div>
<div class="a" style="left:648.8px;top:138.6px;width:135.20000000000005px;height:11.599999999999994px;overflow:hidden"><div class="t" style="left:2.5px;top:3.3999999999999972px;font-size:6.8px;color:#dbe7ff;-webkit-text-stroke:0.05px">KZ</div></div>
<div class="a" style="left:588.5px;top:151.4px;width:195.5px;height:11.400000000000006px;background:#3069c9"></div>
<div class="a" style="left:687.6px;top:99.8px;width:77.39999999999998px;height:11.700000000000003px;background:#2f66c6;border:1px solid #173a86"></div>
<div class="a" style="left:755px;top:100.8px;width:9px;height:9.700000000000003px;background:linear-gradient(#2a5cc0,#1b46a0)"></div>
<svg class="a" style="left:755px;top:100.8px" width="9" height="9.700000000000003"><path d="M2.4 3.6500000000000012 L6.6 3.6500000000000012 L4.5 6.150000000000001 Z" fill="#fff"/></svg>
<div class="t" style="left:689.6px;top:103.05000000000001px;font-size:6.8px;color:#dbe7ff;-webkit-text-stroke:0.05px">Egyenleg csökkentő</div>
<div class="a" style="left:765px;top:99.6px;width:19px;height:12px;background:#fbfbfb"></div>
<div class="a" style="left:767px;top:99.8px;width:16.5px;height:12.200000000000003px;border:1px solid #7e8ea8;border-radius:2px;background:linear-gradient(#fdfdfb,#f0efe8)"></div>
<div class="t" style="left:767px;top:102.9px;width:16.5px;text-align:center;font-size:6.8px;color:#222">...</div>
<div class="a" style="left:687.6px;top:112.6px;width:96.39999999999998px;height:12.400000000000006px;background:#3069c9"></div>
<div class="a" style="left:687.6px;top:126.2px;width:38.69999999999993px;height:11.700000000000003px;background:#3069c9"></div>
<div class="a" style="left:687.6px;top:126.2px;width:38.69999999999993px;height:11.700000000000003px;overflow:hidden"><div class="t" style="left:2.5px;top:3.4500000000000015px;font-size:6.8px;color:#dbe7ff;-webkit-text-stroke:0.05px">VARGAZ</div></div>
<div class="a" style="left:727.3px;top:126.2px;width:56.700000000000045px;height:11.700000000000003px;background:#3069c9"></div>
<div class="a" style="left:727.3px;top:126.2px;width:56.700000000000045px;height:11.700000000000003px;overflow:hidden"><div class="t" style="left:2.5px;top:3.4500000000000015px;font-size:6.8px;color:#dbe7ff;-webkit-text-stroke:0.05px">Varga Zoltán</div></div>
<div class="t g" style="left:648.5px;top:103.8px;font-size:6.8px;color:#1a1a1a">Jogcím irány:</div>
<div class="t g" style="left:648.5px;top:117.3px;font-size:6.8px;color:#1a1a1a">Hivatkozás:</div>
<div class="t g" style="left:648.5px;top:129.8px;font-size:6.8px;color:#1a1a1a">Felhasználó:</div>
<div class="a" style="left:534.3px;top:174.6px;width:256.70000000000005px;height:107.70000000000002px;border:1px solid #dcdcd0;border-radius:2.5px"></div>
<div class="a" style="left:538.5px;top:171.6px;width:87px;height:6px;background:#fbfbfb"></div>
<div class="t" style="left:540px;top:172.0px;font-size:6.8px;color:#3560b4;-webkit-text-stroke:0">Bank/Pénztár/Kompenzáció</div>
<div class="t g" style="left:541px;top:189.2px;font-size:6.8px;color:#1a1a1a">Vállalat bankszámla:</div>
<div class="t g" style="left:541px;top:201.6px;font-size:6.8px;color:#1a1a1a">Partner bankszámla:</div>
<div class="t g" style="left:541px;top:213.8px;font-size:6.8px;color:#1a1a1a">Pénztár:</div>
<div class="t g" style="left:541px;top:226.3px;font-size:6.8px;color:#1a1a1a">Pénztár zárás:</div>
<div class="t g" style="left:541px;top:239.6px;font-size:6.8px;color:#1a1a1a">Kompenzált számla:</div>
<div class="t g" style="left:541px;top:254.3px;font-size:6.8px;color:#1a1a1a">Számla:</div>
<div class="t g" style="left:541px;top:267.8px;font-size:6.8px;color:#1a1a1a">Számla megjegyzés:</div>
<div class="a" style="left:603px;top:185.4px;width:181.20000000000005px;height:90.49999999999997px;background:#7aa6e6"></div>
<div class="a" style="left:603px;top:185.4px;width:181.20000000000005px;height:11.5px;background:#3069c9"></div>
<div class="a" style="left:603px;top:185.4px;width:181.20000000000005px;height:11.5px;overflow:hidden"><div class="t" style="left:2.5px;top:3.35px;font-size:6.8px;color:#dbe7ff;-webkit-text-stroke:0.05px">1</div></div>
<div class="a" style="left:603px;top:198px;width:181.20000000000005px;height:11.300000000000011px;background:#3069c9"></div>
<div class="a" style="left:603px;top:210.4px;width:181.20000000000005px;height:11.199999999999989px;background:#3069c9"></div>
<div class="a" style="left:693px;top:185.4px;width:1px;height:36.19999999999999px;background:#7aa6e6"></div>
<div class="t" style="left:695.5px;top:188.3px;font-size:6.8px;color:#e0eaff;width:88.5px;overflow:hidden;font-family:'Liberation Serif',serif;font-size:7.4px">11111111-11111111-11111133</div>
<div class="a" style="left:603px;top:222.7px;width:181.20000000000005px;height:11.5px;background:#3069c9"></div>
<div class="a" style="left:670px;top:223.4px;width:60px;height:10.400000000000006px;background:#2f66c6;border:1px solid #173a86"></div>
<div class="a" style="left:720px;top:224.4px;width:9px;height:8.400000000000006px;background:linear-gradient(#2a5cc0,#1b46a0)"></div>
<svg class="a" style="left:720px;top:224.4px" width="9" height="8.400000000000006"><path d="M2.4 3.0000000000000027 L6.6 3.0000000000000027 L4.5 5.500000000000003 Z" fill="#fff"/></svg>
<div class="a" style="left:603px;top:236px;width:162.20000000000005px;height:12.300000000000011px;background:#3069c9"></div>
<div class="a" style="left:603px;top:250.5px;width:162.20000000000005px;height:12.5px;background:#3069c9"></div>
<div class="a" style="left:765.2px;top:235px;width:19.5px;height:29px;background:#fbfbfb"></div>
<div class="a" style="left:603px;top:248.3px;width:163px;height:2.2px;background:#fbfbfb"></div>
<div class="a" style="left:656.3px;top:236.2px;width:54.200000000000045px;height:11.900000000000006px;background:#2f66c6;border:1px solid #173a86"></div>
<div class="a" style="left:700.5px;top:237.2px;width:9px;height:9.900000000000006px;background:linear-gradient(#2a5cc0,#1b46a0)"></div>
<svg class="a" style="left:700.5px;top:237.2px" width="9" height="9.900000000000006"><path d="M2.4 3.7500000000000027 L6.6 3.7500000000000027 L4.5 6.250000000000003 Z" fill="#fff"/></svg>
<div class="a" style="left:656.3px;top:250.7px;width:54.200000000000045px;height:12.100000000000023px;background:#2f66c6;border:1px solid #173a86"></div>
<div class="a" style="left:700.5px;top:251.7px;width:9px;height:10.100000000000023px;background:linear-gradient(#2a5cc0,#1b46a0)"></div>
<svg class="a" style="left:700.5px;top:251.7px" width="9" height="10.100000000000023"><path d="M2.4 3.850000000000011 L6.6 3.850000000000011 L4.5 6.350000000000011 Z" fill="#fff"/></svg>
<div class="a" style="left:765.8px;top:236px;width:17.40000000000009px;height:12.300000000000011px;border:1px solid #d8d6cc;border-radius:2px;background:linear-gradient(#fdfdfb,#f0efe8)"></div>
<div class="t" style="left:765.8px;top:239.15px;width:17.40000000000009px;text-align:center;font-size:6.8px;color:#aca899">...</div>
<div class="a" style="left:765.8px;top:250.5px;width:17.40000000000009px;height:12.5px;border:1px solid #d8d6cc;border-radius:2px;background:linear-gradient(#fdfdfb,#f0efe8)"></div>
<div class="t" style="left:765.8px;top:253.75px;width:17.40000000000009px;text-align:center;font-size:6.8px;color:#aca899">...</div>
<div class="a" style="left:603px;top:264.6px;width:181.20000000000005px;height:11.299999999999955px;background:#3069c9"></div>
<div class="a" style="left:534.3px;top:287.6px;width:256.70000000000005px;height:77.69999999999999px;border:1px solid #dcdcd0;border-radius:2.5px"></div>
<div class="a" style="left:538.5px;top:284.6px;width:25.5px;height:6px;background:#fbfbfb"></div>
<div class="t" style="left:540px;top:285.0px;font-size:6.8px;color:#3560b4;-webkit-text-stroke:0">Értékek</div>
<div class="t g" style="left:541px;top:302.5px;font-size:6.8px;color:#1a1a1a">Érték:</div>
<div class="t g" style="left:541px;top:315.0px;font-size:6.8px;color:#1a1a1a">Érték (kpn):</div>
<div class="t g" style="left:541px;top:327.5px;font-size:6.8px;color:#1a1a1a">Érték (szpn):</div>
<div class="a" style="left:580px;top:298.7px;width:203.5px;height:36.80000000000001px;background:#7aa6e6"></div>
<div class="a" style="left:580px;top:298.7px;width:203.5px;height:11.699999999999989px;background:#3069c9"></div>
<div class="a" style="left:580px;top:311.5px;width:203.5px;height:11.5px;background:#3069c9"></div>
<div class="a" style="left:580px;top:324.1px;width:203.5px;height:11.399999999999977px;background:#3069c9"></div>
<div class="a" style="left:682px;top:298.7px;width:1px;height:36.80000000000001px;background:#7aa6e6"></div>
<div class="t" style="left:600px;top:301.3px;width:80px;text-align:right;font-size:6.8px;color:#e0eaff">2000000</div>
<div class="t" style="left:684.5px;top:301.3px;font-size:6.8px;color:#e0eaff">HUF</div>
<div class="t" style="left:600px;top:314.1px;width:80px;text-align:right;font-size:6.8px;color:#e0eaff">2000000</div>
<div class="t" style="left:684.5px;top:314.1px;font-size:6.8px;color:#e0eaff">HUF</div>
<div class="a" style="left:534.3px;top:371px;width:256.70000000000005px;height:89.5px;border:1px solid #dcdcd0;border-radius:2.5px"></div>
<div class="a" style="left:538.5px;top:368px;width:22px;height:6px;background:#fbfbfb"></div>
<div class="t" style="left:540px;top:368.4px;font-size:6.8px;color:#3560b4;-webkit-text-stroke:0">Egyéb</div>
<div class="t g" style="left:541px;top:384.7px;font-size:6.8px;color:#1a1a1a">Munkaszám:</div>
<div class="t g" style="left:541px;top:397.1px;font-size:6.8px;color:#1a1a1a">Költséghely:</div>
<div class="t g" style="left:541px;top:409.6px;font-size:6.8px;color:#1a1a1a">Költségviselő:</div>
<div class="t g" style="left:541px;top:422.0px;font-size:6.8px;color:#1a1a1a">Hitelszerződés:</div>
<div class="t g" style="left:541px;top:434.4px;font-size:6.8px;color:#1a1a1a">Jelölt pénz tétel:</div>
<div class="t g" style="left:541px;top:446.8px;font-size:6.8px;color:#1a1a1a">Tétel megjegyzés:</div>
<div class="a" style="left:596.6px;top:380.7px;width:186.89999999999998px;height:74.10000000000002px;background:#7aa6e6"></div>
<div class="a" style="left:596.6px;top:380.7px;width:186.89999999999998px;height:12.400000000000034px;background:#3069c9"></div>
<div class="a" style="left:596.6px;top:394.1px;width:186.89999999999998px;height:11.5px;background:#3069c9"></div>
<div class="a" style="left:596.6px;top:406.6px;width:186.89999999999998px;height:11.399999999999977px;background:#3069c9"></div>
<div class="a" style="left:596.6px;top:419.0px;width:186.89999999999998px;height:11.399999999999977px;background:#3069c9"></div>
<div class="a" style="left:596.6px;top:431.4px;width:186.89999999999998px;height:11.400000000000034px;background:#3069c9"></div>
<div class="a" style="left:596.6px;top:443.8px;width:186.89999999999998px;height:11.0px;background:#3069c9"></div>
<div class="a" style="left:690.6px;top:380.7px;width:1px;height:62.10000000000002px;background:#7aa6e6"></div>
</body></html>
